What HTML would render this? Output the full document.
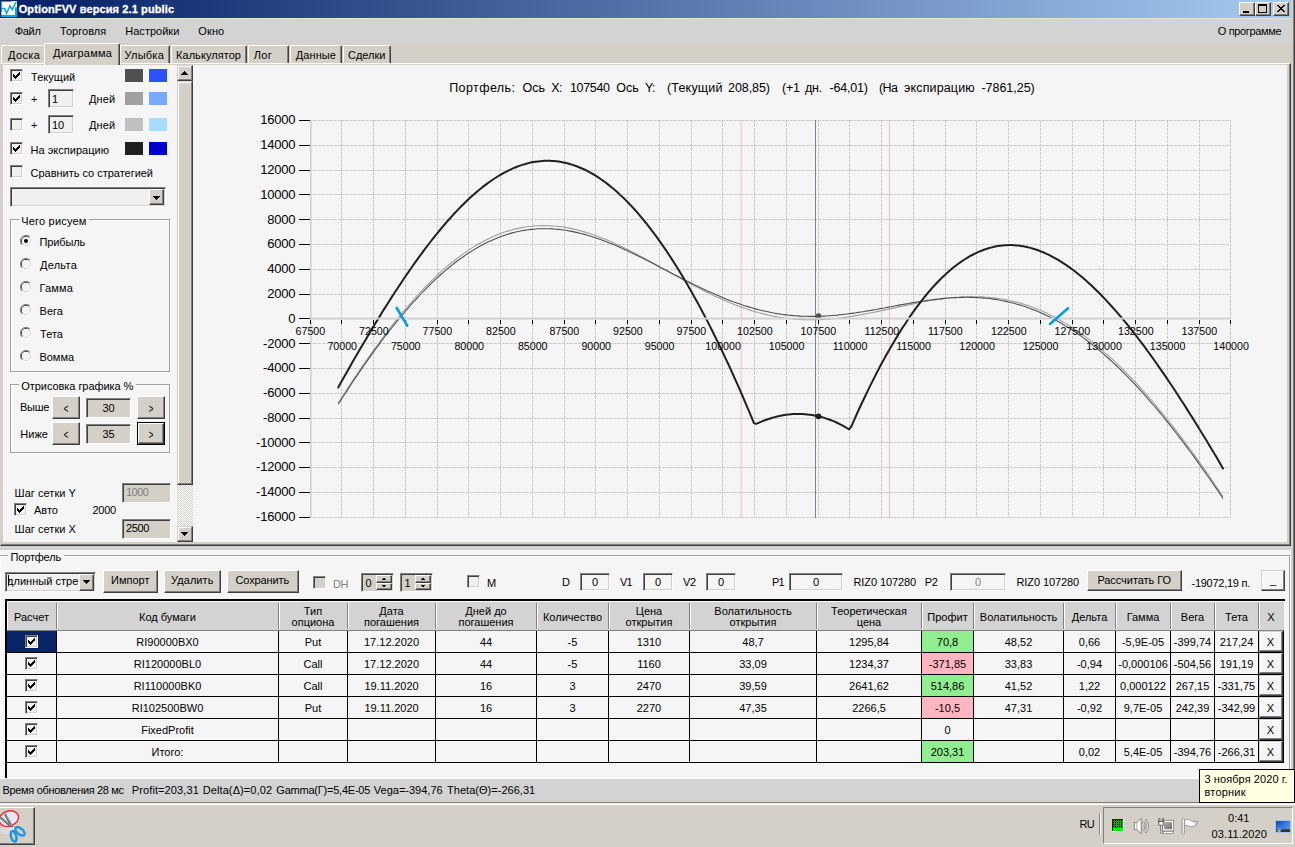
<!DOCTYPE html><html lang="ru"><head><meta charset="utf-8"><title>OptionFVV</title><style>html,body{margin:0;padding:0}
body{width:1295px;height:847px;overflow:hidden;background:#d4d0c8;position:relative;font-family:"Liberation Sans",sans-serif;font-size:11px;color:#000}
.a{position:absolute;box-sizing:border-box}
.t{white-space:pre}
.gl{transform:scale(0.72,1.22);transform-origin:50% 60%}
.dis{text-shadow:1px 1px 0 #fff}
.tt{-webkit-text-stroke:0.3px #fff}
.r{border:1px solid;border-color:#fff #404040 #404040 #fff;box-shadow:inset -1px -1px 0 #808080;background:#d4d0c8}
.r2{border:1px solid;border-color:#d4d0c8 #404040 #404040 #d4d0c8;box-shadow:inset -1px -1px 0 #808080,inset 1px 1px 0 #fff;background:#d4d0c8}
.s{border:1px solid;border-color:#808080 #fff #fff #808080;box-shadow:inset 1px 1px 0 #404040,inset -1px -1px 0 #d4d0c8}
</style></head><body>
<div class="a " style="left:0px;top:0px;width:1291px;height:18px;background:linear-gradient(90deg,#0a246a 0%,#0a246a 4%,#a6caf0 100%);"></div>
<svg class="a" style="left:1px;top:1px" width="16" height="16" viewBox="0 0 16 16"><rect width="16" height="16" fill="#fff"/><path d="M0 0H10.5V1H1V11.5H0ZM0 13H1V14H14V6.2H16V16H0Z" fill="#00a8f4"/><path d="M1 7.5H3.6L5.6 12.3L9 4.9L11.2 8.6L15.4 0.6" fill="none" stroke="#0ea2ee" stroke-width="1.5" stroke-linejoin="miter"/></svg>
<span class="a t tt" style="top:2.19px;font-size:11px;line-height:14px;color:#fff;font-weight:bold;letter-spacing:0.113px;left:18.7px;">OptionFVV версия 2.1 public</span>
<div class="a r" style="left:1239px;top:2px;width:16px;height:14px;"></div>
<div class="a r" style="left:1255px;top:2px;width:16px;height:14px;"></div>
<div class="a r" style="left:1273px;top:2px;width:16px;height:14px;"></div>
<div class="a " style="left:1243px;top:11px;width:6px;height:2px;background:#000;"></div>
<div class="a " style="left:1258px;top:4px;width:9px;height:9px;border:1px solid #000;border-top-width:2px;"></div>
<svg class="a" style="left:1277px;top:5px" width="9" height="8" viewBox="0 0 9 8" shape-rendering="crispEdges"><path d="M0 0h2v1h-2zM1 1h2v1h-2zM2 2h2v1h-2zM3 3h2v1h-2zM2 4h2v1h-2zM1 5h2v1h-2zM0 6h2v1h-2zM6 0h2v1h-2zM5 1h2v1h-2zM4 2h2v1h-2zM4 4h2v1h-2zM5 5h2v1h-2zM6 6h2v1h-2z" fill="#000"/></svg>
<div class="a " style="left:1293px;top:0px;width:1px;height:803px;background:#808080;"></div>
<div class="a " style="left:1294px;top:0px;width:1px;height:803px;background:#404040;"></div>
<div class="a " style="left:0px;top:18px;width:1291px;height:25px;background:#d3d3d3;border-top:1px solid #e6e2da;"></div>
<span class="a t " style="top:24.19px;font-size:11px;line-height:14px;letter-spacing:-0.312px;left:14.7px;">Файл</span>
<span class="a t " style="top:24.19px;font-size:11px;line-height:14px;letter-spacing:0.031px;left:60px;">Торговля</span>
<span class="a t " style="top:24.19px;font-size:11px;line-height:14px;letter-spacing:0.007px;left:125.3px;">Настройки</span>
<span class="a t " style="top:24.19px;font-size:11px;line-height:14px;letter-spacing:0.109px;left:198.3px;">Окно</span>
<span class="a t " style="top:24.19px;font-size:11px;line-height:14px;letter-spacing:-0.354px;left:1217.8px;">О программе</span>
<div class="a " style="left:1px;top:45px;width:45px;height:19px;border:1px solid;border-color:#fff #404040 transparent #fff;border-bottom:none;box-shadow:inset -1px 0 0 #808080;border-radius:2px 2px 0 0;"></div>
<span class="a t " style="top:48.19px;font-size:11px;line-height:14px;letter-spacing:0.365px;left:8px;">Доска</span>
<div class="a " style="left:120px;top:45px;width:50px;height:19px;border:1px solid;border-color:#fff #404040 transparent #fff;border-bottom:none;box-shadow:inset -1px 0 0 #808080;border-radius:2px 2px 0 0;"></div>
<span class="a t " style="top:48.19px;font-size:11px;line-height:14px;letter-spacing:0.240px;left:124.5px;">Улыбка</span>
<div class="a " style="left:171px;top:45px;width:76px;height:19px;border:1px solid;border-color:#fff #404040 transparent #fff;border-bottom:none;box-shadow:inset -1px 0 0 #808080;border-radius:2px 2px 0 0;"></div>
<span class="a t " style="top:48.19px;font-size:11px;line-height:14px;letter-spacing:0.054px;left:176px;">Калькулятор</span>
<div class="a " style="left:248px;top:45px;width:41px;height:19px;border:1px solid;border-color:#fff #404040 transparent #fff;border-bottom:none;box-shadow:inset -1px 0 0 #808080;border-radius:2px 2px 0 0;"></div>
<span class="a t " style="top:48.19px;font-size:11px;line-height:14px;letter-spacing:0.314px;left:253.7px;">Лог</span>
<div class="a " style="left:290px;top:45px;width:52px;height:19px;border:1px solid;border-color:#fff #404040 transparent #fff;border-bottom:none;box-shadow:inset -1px 0 0 #808080;border-radius:2px 2px 0 0;"></div>
<span class="a t " style="top:48.19px;font-size:11px;line-height:14px;letter-spacing:0.075px;left:295.8px;">Данные</span>
<div class="a " style="left:343px;top:45px;width:48px;height:19px;border:1px solid;border-color:#fff #404040 transparent #fff;border-bottom:none;box-shadow:inset -1px 0 0 #808080;border-radius:2px 2px 0 0;"></div>
<span class="a t " style="top:48.19px;font-size:11px;line-height:14px;letter-spacing:-0.033px;left:348px;">Сделки</span>
<div class="a " style="left:0px;top:63px;width:1291px;height:483px;border:1px solid;border-color:#fff #404040 #404040 #d4d0c8;box-shadow:inset -1px -1px 0 #808080;background:#d4d0c8;"></div>
<div class="a " style="left:44px;top:43px;width:76px;height:22px;border:1px solid;border-color:#fff #404040 transparent #fff;border-bottom:none;box-shadow:inset -1px 0 0 #808080;border-radius:2px 2px 0 0;background:#d4d0c8;"></div>
<span class="a t " style="top:46.19px;font-size:11px;line-height:14px;letter-spacing:0.200px;left:53px;">Диаграмма</span>
<div class="a " style="left:3px;top:65px;width:1284px;height:477px;background:#f5f5f5;"></div>
<div class="a s" style="left:10px;top:69px;width:13px;height:13px;background:#f0f0f0;"><svg class="a" style="left:2px;top:2px" width="7" height="7" viewBox="0 0 7 7" shape-rendering="crispEdges"><path d="M0 2h1v3h-1zM1 3h1v3h-1zM2 4h1v3h-1zM3 3h1v3h-1zM4 2h1v3h-1zM5 1h1v3h-1zM6 0h1v3h-1z" fill="#000"/></svg></div>
<span class="a t " style="top:70.19px;font-size:11px;line-height:14px;letter-spacing:0.043px;left:31px;">Текущий</span>
<div class="a " style="left:125px;top:69px;width:18px;height:13px;background:#505050;"></div>
<div class="a " style="left:149px;top:69px;width:18px;height:13px;background:#3050ff;"></div>
<div class="a s" style="left:10px;top:92px;width:13px;height:13px;background:#f0f0f0;"><svg class="a" style="left:2px;top:2px" width="7" height="7" viewBox="0 0 7 7" shape-rendering="crispEdges"><path d="M0 2h1v3h-1zM1 3h1v3h-1zM2 4h1v3h-1zM3 3h1v3h-1zM4 2h1v3h-1zM5 1h1v3h-1zM6 0h1v3h-1z" fill="#000"/></svg></div>
<span class="a t " style="top:92.19px;font-size:11px;line-height:14px;left:31px;">+</span>
<div class="a s" style="left:48px;top:89px;width:26px;height:19px;background:#f0f0f0;"></div>
<span class="a t " style="top:92.19px;font-size:11px;line-height:14px;left:52px;">1</span>
<span class="a t " style="top:92.19px;font-size:11px;line-height:14px;letter-spacing:0.126px;left:89px;">Дней</span>
<div class="a " style="left:125px;top:92px;width:18px;height:13px;background:#a0a0a0;"></div>
<div class="a " style="left:149px;top:92px;width:18px;height:13px;background:#78a8ff;"></div>
<div class="a s" style="left:10px;top:118px;width:13px;height:13px;background:#f0f0f0;"></div>
<span class="a t " style="top:118.19px;font-size:11px;line-height:14px;left:31px;">+</span>
<div class="a s" style="left:48px;top:115px;width:26px;height:19px;background:#f0f0f0;"></div>
<span class="a t " style="top:118.19px;font-size:11px;line-height:14px;left:52px;">10</span>
<span class="a t " style="top:118.19px;font-size:11px;line-height:14px;letter-spacing:0.126px;left:89px;">Дней</span>
<div class="a " style="left:125px;top:118px;width:18px;height:13px;background:#c0c0c0;"></div>
<div class="a " style="left:149px;top:118px;width:18px;height:13px;background:#a8dcff;"></div>
<div class="a s" style="left:10px;top:142px;width:13px;height:13px;background:#f0f0f0;"><svg class="a" style="left:2px;top:2px" width="7" height="7" viewBox="0 0 7 7" shape-rendering="crispEdges"><path d="M0 2h1v3h-1zM1 3h1v3h-1zM2 4h1v3h-1zM3 3h1v3h-1zM4 2h1v3h-1zM5 1h1v3h-1zM6 0h1v3h-1z" fill="#000"/></svg></div>
<span class="a t " style="top:143.19px;font-size:11px;line-height:14px;letter-spacing:0.023px;left:30.5px;">На экспирацию</span>
<div class="a " style="left:125px;top:142px;width:18px;height:13px;background:#202020;"></div>
<div class="a " style="left:149px;top:142px;width:18px;height:13px;background:#0000c8;"></div>
<div class="a s" style="left:10px;top:165px;width:13px;height:13px;background:#f0f0f0;"></div>
<span class="a t " style="top:165.69px;font-size:11px;line-height:14px;letter-spacing:-0.016px;left:30.5px;">Сравнить со стратегией</span>
<div class="a s" style="left:10px;top:187px;width:156px;height:20px;background:#f0f0f0;"></div>
<div class="a r" style="left:149px;top:189px;width:15px;height:16px;"></div>
<svg class="a" style="left:153px;top:196px" width="7" height="4" viewBox="0 0 7 4" shape-rendering="crispEdges"><path d="M0 0h7v1h-7zM1 1h5v1h-5zM2 2h3v1h-3zM3 3h1v1h-1z" fill="#000"/></svg>
<div class="a " style="left:10px;top:219px;width:160px;height:153px;border:1px solid #a0a0a0;box-shadow:inset 1px 1px 0 #fff, 1px 1px 0 #fff;"></div>
<div class="a " style="left:19.3px;top:213px;width:70.2px;height:13px;background:#f5f5f5;"></div>
<span class="a t " style="top:214.19px;font-size:11px;line-height:14px;letter-spacing:0.180px;left:21.3px;">Чего рисуем</span>
<svg class="a" style="left:20px;top:235px" width="12" height="12" viewBox="0 0 12 12"><circle cx="6" cy="6" r="5.5" fill="#fff"/><path d="M10 2A5.5 5.5 0 0 0 2 10" fill="none" stroke="#808080" stroke-width="1"/><path d="M9.3 2.7A4.6 4.6 0 0 0 2.7 9.3" fill="none" stroke="#404040" stroke-width="1"/><path d="M10 2A5.5 5.5 0 0 1 2 10" fill="none" stroke="#fff" stroke-width="1"/><path d="M9.3 2.7A4.6 4.6 0 0 1 2.7 9.3" fill="none" stroke="#d4d0c8" stroke-width="1"/><circle cx="6" cy="6" r="3.9" fill="#f5f5f5"/><circle cx="6" cy="6" r="2" fill="#000"/></svg>
<span class="a t " style="top:234.89px;font-size:11px;line-height:14px;letter-spacing:-0.147px;left:39.5px;">Прибыль</span>
<svg class="a" style="left:20px;top:258px" width="12" height="12" viewBox="0 0 12 12"><circle cx="6" cy="6" r="5.5" fill="#fff"/><path d="M10 2A5.5 5.5 0 0 0 2 10" fill="none" stroke="#808080" stroke-width="1"/><path d="M9.3 2.7A4.6 4.6 0 0 0 2.7 9.3" fill="none" stroke="#404040" stroke-width="1"/><path d="M10 2A5.5 5.5 0 0 1 2 10" fill="none" stroke="#fff" stroke-width="1"/><path d="M9.3 2.7A4.6 4.6 0 0 1 2.7 9.3" fill="none" stroke="#d4d0c8" stroke-width="1"/><circle cx="6" cy="6" r="3.9" fill="#f5f5f5"/></svg>
<span class="a t " style="top:257.89px;font-size:11px;line-height:14px;letter-spacing:0.245px;left:40px;">Дельта</span>
<svg class="a" style="left:20px;top:281px" width="12" height="12" viewBox="0 0 12 12"><circle cx="6" cy="6" r="5.5" fill="#fff"/><path d="M10 2A5.5 5.5 0 0 0 2 10" fill="none" stroke="#808080" stroke-width="1"/><path d="M9.3 2.7A4.6 4.6 0 0 0 2.7 9.3" fill="none" stroke="#404040" stroke-width="1"/><path d="M10 2A5.5 5.5 0 0 1 2 10" fill="none" stroke="#fff" stroke-width="1"/><path d="M9.3 2.7A4.6 4.6 0 0 1 2.7 9.3" fill="none" stroke="#d4d0c8" stroke-width="1"/><circle cx="6" cy="6" r="3.9" fill="#f5f5f5"/></svg>
<span class="a t " style="top:280.89px;font-size:11px;line-height:14px;letter-spacing:0.159px;left:39.5px;">Гамма</span>
<svg class="a" style="left:20px;top:304px" width="12" height="12" viewBox="0 0 12 12"><circle cx="6" cy="6" r="5.5" fill="#fff"/><path d="M10 2A5.5 5.5 0 0 0 2 10" fill="none" stroke="#808080" stroke-width="1"/><path d="M9.3 2.7A4.6 4.6 0 0 0 2.7 9.3" fill="none" stroke="#404040" stroke-width="1"/><path d="M10 2A5.5 5.5 0 0 1 2 10" fill="none" stroke="#fff" stroke-width="1"/><path d="M9.3 2.7A4.6 4.6 0 0 1 2.7 9.3" fill="none" stroke="#d4d0c8" stroke-width="1"/><circle cx="6" cy="6" r="3.9" fill="#f5f5f5"/></svg>
<span class="a t " style="top:303.89px;font-size:11px;line-height:14px;letter-spacing:0.039px;left:39.5px;">Вега</span>
<svg class="a" style="left:20px;top:327px" width="12" height="12" viewBox="0 0 12 12"><circle cx="6" cy="6" r="5.5" fill="#fff"/><path d="M10 2A5.5 5.5 0 0 0 2 10" fill="none" stroke="#808080" stroke-width="1"/><path d="M9.3 2.7A4.6 4.6 0 0 0 2.7 9.3" fill="none" stroke="#404040" stroke-width="1"/><path d="M10 2A5.5 5.5 0 0 1 2 10" fill="none" stroke="#fff" stroke-width="1"/><path d="M9.3 2.7A4.6 4.6 0 0 1 2.7 9.3" fill="none" stroke="#d4d0c8" stroke-width="1"/><circle cx="6" cy="6" r="3.9" fill="#f5f5f5"/></svg>
<span class="a t " style="top:326.89px;font-size:11px;line-height:14px;letter-spacing:0.027px;left:40px;">Тета</span>
<svg class="a" style="left:20px;top:350px" width="12" height="12" viewBox="0 0 12 12"><circle cx="6" cy="6" r="5.5" fill="#fff"/><path d="M10 2A5.5 5.5 0 0 0 2 10" fill="none" stroke="#808080" stroke-width="1"/><path d="M9.3 2.7A4.6 4.6 0 0 0 2.7 9.3" fill="none" stroke="#404040" stroke-width="1"/><path d="M10 2A5.5 5.5 0 0 1 2 10" fill="none" stroke="#fff" stroke-width="1"/><path d="M9.3 2.7A4.6 4.6 0 0 1 2.7 9.3" fill="none" stroke="#d4d0c8" stroke-width="1"/><circle cx="6" cy="6" r="3.9" fill="#f5f5f5"/></svg>
<span class="a t " style="top:349.89px;font-size:11px;line-height:14px;letter-spacing:-0.041px;left:39.5px;">Вомма</span>
<div class="a " style="left:10px;top:384px;width:160px;height:69px;border:1px solid #a0a0a0;box-shadow:inset 1px 1px 0 #fff, 1px 1px 0 #fff;"></div>
<div class="a " style="left:19.3px;top:378px;width:117.00000000000001px;height:13px;background:#f5f5f5;"></div>
<span class="a t " style="top:379.19px;font-size:11px;line-height:14px;letter-spacing:-0.059px;left:21.3px;">Отрисовка графика %</span>
<span class="a t " style="top:400.49px;font-size:11px;line-height:14px;letter-spacing:-0.297px;left:20px;">Выше</span>
<div class="a r" style="left:52px;top:396px;width:28px;height:23px;background:#d4d0c8;"></div>
<span class="a t gl" style="top:400.69px;font-size:11px;line-height:14px;left:52px;width:28px;text-align:center;">&lt;</span>
<div class="a s" style="left:86px;top:398px;width:45px;height:20px;background:#d4d0c8;"></div>
<span class="a t " style="top:400.99px;font-size:11px;line-height:14px;left:86px;width:45px;text-align:center;">30</span>
<div class="a r" style="left:137px;top:396px;width:28px;height:23px;background:#d4d0c8;"></div>
<span class="a t gl" style="top:400.69px;font-size:11px;line-height:14px;left:137px;width:28px;text-align:center;">&gt;</span>
<span class="a t " style="top:426.69px;font-size:11px;line-height:14px;letter-spacing:0.030px;left:20.3px;">Ниже</span>
<div class="a r" style="left:52px;top:422px;width:28px;height:23px;background:#d4d0c8;"></div>
<span class="a t gl" style="top:426.69px;font-size:11px;line-height:14px;left:52px;width:28px;text-align:center;">&lt;</span>
<div class="a s" style="left:86px;top:424px;width:45px;height:20px;background:#d4d0c8;"></div>
<span class="a t " style="top:426.99px;font-size:11px;line-height:14px;left:86px;width:45px;text-align:center;">35</span>
<div class="a " style="left:137px;top:422px;width:28px;height:23px;border:1px solid #000;background:#d4d0c8;"></div>
<div class="a r" style="left:138px;top:423px;width:26px;height:21px;background:#d4d0c8;"></div>
<span class="a t gl" style="top:426.69px;font-size:11px;line-height:14px;left:137px;width:28px;text-align:center;">&gt;</span>
<span class="a t " style="top:485.89px;font-size:11px;line-height:14px;letter-spacing:0.053px;left:14.5px;">Шаг сетки Y</span>
<div class="a s" style="left:122px;top:483px;width:49px;height:20px;background:#d4d0c8;"></div>
<span class="a t " style="top:485.49px;font-size:11px;line-height:14px;color:#808080;letter-spacing:-0.496px;left:126px;">1000</span>
<div class="a s" style="left:14px;top:503px;width:13px;height:13px;background:#f0f0f0;"><svg class="a" style="left:2px;top:2px" width="7" height="7" viewBox="0 0 7 7" shape-rendering="crispEdges"><path d="M0 2h1v3h-1zM1 3h1v3h-1zM2 4h1v3h-1zM3 3h1v3h-1zM4 2h1v3h-1zM5 1h1v3h-1zM6 0h1v3h-1z" fill="#000"/></svg></div>
<span class="a t " style="top:503.19px;font-size:11px;line-height:14px;left:34px;">Авто</span>
<span class="a t " style="top:502.89px;font-size:11px;line-height:14px;letter-spacing:-0.246px;left:92.5px;">2000</span>
<span class="a t " style="top:521.69px;font-size:11px;line-height:14px;letter-spacing:0.053px;left:14.5px;">Шаг сетки X</span>
<div class="a s" style="left:122px;top:519px;width:49px;height:20px;background:#d4d0c8;"></div>
<span class="a t " style="top:521.19px;font-size:11px;line-height:14px;letter-spacing:-0.371px;left:126px;">2500</span>
<div class="a " style="left:177px;top:65px;width:16px;height:477px;background:repeating-conic-gradient(#fff 0% 25%,#d4d0c8 0% 50%) 0 0/2px 2px;"></div>
<div class="a r2" style="left:177px;top:65px;width:16px;height:16px;"></div>
<svg class="a" style="left:181px;top:71px" width="7" height="4" viewBox="0 0 7 4" shape-rendering="crispEdges"><path d="M3 0h1v1h-1zM2 1h3v1h-3zM1 2h5v1h-5zM0 3h7v1h-7z" fill="#000"/></svg>
<div class="a r2" style="left:177px;top:81px;width:16px;height:404px;"></div>
<div class="a r2" style="left:177px;top:526px;width:16px;height:16px;"></div>
<svg class="a" style="left:181px;top:532px" width="7" height="4" viewBox="0 0 7 4" shape-rendering="crispEdges"><path d="M0 0h7v1h-7zM1 1h5v1h-5zM2 2h3v1h-3zM3 3h1v1h-1z" fill="#000"/></svg>
<svg class="a" style="left:0;top:0" width="1295" height="847" viewBox="0 0 1295 847"><path d="M341.5 120V518M373.5 120V518M405.5 120V518M437.5 120V518M468.5 120V518M500.5 120V518M532.5 120V518M564.5 120V518M595.5 120V518M627.5 120V518M659.5 120V518M691.5 120V518M722.5 120V518M754.5 120V518M786.5 120V518M818.5 120V518M849.5 120V518M881.5 120V518M913.5 120V518M945.5 120V518M976.5 120V518M1008.5 120V518M1040.5 120V518M1072.5 120V518M1103.5 120V518M1135.5 120V518M1167.5 120V518M1199.5 120V518M1230.5 120V518M310 120.5H1231M310 145.5H1231M310 170.5H1231M310 194.5H1231M310 219.5H1231M310 244.5H1231M310 269.5H1231M310 294.5H1231M310 343.5H1231M310 368.5H1231M310 393.5H1231M310 418.5H1231M310 442.5H1231M310 467.5H1231M310 492.5H1231M310 517.5H1231" stroke="#c9c9c9" stroke-width="1" stroke-dasharray="3 1" fill="none" shape-rendering="crispEdges"/><path d="M741.2 120V518M889.45 120V518" stroke="#ffb6c1" stroke-width="1"/><path d="M815.5 120V518" stroke="#6a85a8" stroke-width="1" shape-rendering="crispEdges"/><path d="M338.2 403.1 L340.5 399.4 L342.8 395.8 L345.2 392.2 L347.5 388.6 L349.8 385.0 L352.1 381.5 L354.4 378.0 L356.8 374.5 L359.1 371.0 L361.4 367.6 L363.7 364.2 L366.1 360.9 L368.4 357.5 L370.7 354.2 L373.0 351.0 L375.3 347.7 L377.7 344.5 L380.0 341.4 L382.3 338.2 L384.6 335.1 L387.0 332.1 L389.3 329.1 L391.6 326.1 L393.9 323.1 L396.2 320.2 L398.6 317.3 L400.9 314.5 L403.2 311.7 L405.5 308.9 L407.9 306.2 L410.2 303.5 L412.5 300.8 L414.8 298.2 L417.2 295.7 L419.5 293.1 L421.8 290.7 L424.1 288.2 L426.4 285.8 L428.8 283.5 L431.1 281.2 L433.4 278.9 L435.7 276.7 L438.1 274.5 L440.4 272.4 L442.7 270.3 L445.0 268.2 L447.3 266.2 L449.7 264.3 L452.0 262.4 L454.3 260.5 L456.6 258.7 L459.0 257.0 L461.3 255.2 L463.6 253.6 L465.9 252.0 L468.2 250.4 L470.6 248.9 L472.9 247.4 L475.2 245.9 L477.5 244.6 L479.9 243.2 L482.2 242.0 L484.5 240.7 L486.8 239.5 L489.1 238.4 L491.5 237.3 L493.8 236.3 L496.1 235.3 L498.4 234.3 L500.8 233.5 L503.1 232.6 L505.4 231.8 L507.7 231.1 L510.0 230.4 L512.4 229.7 L514.7 229.1 L517.0 228.6 L519.3 228.1 L521.7 227.6 L524.0 227.2 L526.3 226.8 L528.6 226.5 L531.0 226.3 L533.3 226.0 L535.6 225.8 L537.9 225.7 L540.2 225.6 L542.6 225.6 L544.9 225.6 L547.2 225.6 L549.5 225.7 L551.9 225.9 L554.2 226.0 L556.5 226.2 L558.8 226.5 L561.1 226.8 L563.5 227.1 L565.8 227.5 L568.1 227.9 L570.4 228.4 L572.8 228.9 L575.1 229.4 L577.4 230.0 L579.7 230.6 L582.0 231.2 L584.4 231.9 L586.7 232.6 L589.0 233.3 L591.3 234.1 L593.7 234.9 L596.0 235.7 L598.3 236.6 L600.6 237.5 L602.9 238.4 L605.3 239.3 L607.6 240.3 L609.9 241.3 L612.2 242.3 L614.6 243.3 L616.9 244.4 L619.2 245.5 L621.5 246.6 L623.9 247.7 L626.2 248.8 L628.5 250.0 L630.8 251.2 L633.1 252.4 L635.5 253.6 L637.8 254.8 L640.1 256.0 L642.4 257.2 L644.8 258.5 L647.1 259.8 L649.4 261.0 L651.7 262.3 L654.0 263.6 L656.4 264.9 L658.7 266.2 L661.0 267.5 L663.3 268.8 L665.7 270.1 L668.0 271.4 L670.3 272.7 L672.6 273.9 L674.9 275.2 L677.3 276.5 L679.6 277.8 L681.9 279.1 L684.2 280.4 L686.6 281.6 L688.9 282.9 L691.2 284.1 L693.5 285.4 L695.8 286.6 L698.2 287.8 L700.5 289.0 L702.8 290.2 L705.1 291.4 L707.5 292.5 L709.8 293.7 L712.1 294.8 L714.4 295.9 L716.7 297.0 L719.1 298.0 L721.4 299.1 L723.7 300.1 L726.0 301.1 L728.4 302.1 L730.7 303.1 L733.0 304.0 L735.3 304.9 L737.7 305.8 L740.0 306.7 L742.3 307.5 L744.6 308.3 L746.9 309.1 L749.3 309.9 L751.6 310.6 L753.9 311.3 L756.2 312.0 L758.6 312.7 L760.9 313.3 L763.2 313.9 L765.5 314.4 L767.8 315.0 L770.2 315.5 L772.5 316.0 L774.8 316.4 L777.1 316.9 L779.5 317.2 L781.8 317.6 L784.1 318.0 L786.4 318.3 L788.7 318.5 L791.1 318.8 L793.4 319.0 L795.7 319.2 L798.0 319.4 L800.4 319.5 L802.7 319.6 L805.0 319.7 L807.3 319.8 L809.6 319.8 L812.0 319.8 L814.3 319.8 L816.6 319.7 L818.9 319.7 L821.3 319.6 L823.6 319.5 L825.9 319.3 L828.2 319.1 L830.5 319.0 L832.9 318.8 L835.2 318.5 L837.5 318.3 L839.8 318.0 L842.2 317.7 L844.5 317.4 L846.8 317.1 L849.1 316.7 L851.5 316.4 L853.8 316.0 L856.1 315.6 L858.4 315.2 L860.7 314.8 L863.1 314.4 L865.4 313.9 L867.7 313.5 L870.0 313.0 L872.4 312.6 L874.7 312.1 L877.0 311.6 L879.3 311.1 L881.6 310.6 L884.0 310.1 L886.3 309.6 L888.6 309.1 L890.9 308.6 L893.3 308.1 L895.6 307.6 L897.9 307.1 L900.2 306.6 L902.5 306.1 L904.9 305.6 L907.2 305.1 L909.5 304.6 L911.8 304.1 L914.2 303.6 L916.5 303.2 L918.8 302.7 L921.1 302.3 L923.4 301.8 L925.8 301.4 L928.1 301.0 L930.4 300.6 L932.7 300.2 L935.1 299.9 L937.4 299.5 L939.7 299.2 L942.0 298.9 L944.4 298.6 L946.7 298.3 L949.0 298.0 L951.3 297.8 L953.6 297.6 L956.0 297.4 L958.3 297.2 L960.6 297.1 L962.9 296.9 L965.3 296.8 L967.6 296.8 L969.9 296.7 L972.2 296.7 L974.5 296.7 L976.9 296.7 L979.2 296.8 L981.5 296.9 L983.8 297.0 L986.2 297.2 L988.5 297.4 L990.8 297.6 L993.1 297.8 L995.4 298.1 L997.8 298.4 L1000.1 298.8 L1002.4 299.1 L1004.7 299.6 L1007.1 300.0 L1009.4 300.5 L1011.7 301.0 L1014.0 301.6 L1016.3 302.1 L1018.7 302.8 L1021.0 303.4 L1023.3 304.1 L1025.6 304.9 L1028.0 305.6 L1030.3 306.4 L1032.6 307.3 L1034.9 308.2 L1037.2 309.1 L1039.6 310.0 L1041.9 311.0 L1044.2 312.1 L1046.5 313.1 L1048.9 314.3 L1051.2 315.4 L1053.5 316.6 L1055.8 317.8 L1058.2 319.1 L1060.5 320.4 L1062.8 321.7 L1065.1 323.1 L1067.4 324.5 L1069.8 326.0 L1072.1 327.4 L1074.4 329.0 L1076.7 330.5 L1079.1 332.1 L1081.4 333.8 L1083.7 335.5 L1086.0 337.2 L1088.3 338.9 L1090.7 340.7 L1093.0 342.6 L1095.3 344.4 L1097.6 346.3 L1100.0 348.3 L1102.3 350.3 L1104.6 352.3 L1106.9 354.3 L1109.2 356.4 L1111.6 358.5 L1113.9 360.7 L1116.2 362.9 L1118.5 365.1 L1120.9 367.3 L1123.2 369.6 L1125.5 372.0 L1127.8 374.3 L1130.1 376.7 L1132.5 379.2 L1134.8 381.6 L1137.1 384.1 L1139.4 386.6 L1141.8 389.2 L1144.1 391.8 L1146.4 394.4 L1148.7 397.1 L1151.0 399.7 L1153.4 402.5 L1155.7 405.2 L1158.0 408.0 L1160.3 410.8 L1162.7 413.6 L1165.0 416.5 L1167.3 419.4 L1169.6 422.3 L1172.0 425.2 L1174.3 428.2 L1176.6 431.2 L1178.9 434.3 L1181.2 437.3 L1183.6 440.4 L1185.9 443.5 L1188.2 446.6 L1190.5 449.8 L1192.9 453.0 L1195.2 456.2 L1197.5 459.4 L1199.8 462.7 L1202.1 466.0 L1204.5 469.3 L1206.8 472.6 L1209.1 476.0 L1211.4 479.3 L1213.8 482.7 L1216.1 486.2 L1218.4 489.6 L1220.7 493.1 L1223.0 496.5" stroke="#a0a0a0" stroke-width="1.1" fill="none"/><path d="M338.2 404.3 L340.5 400.7 L342.8 397.0 L345.2 393.5 L347.5 389.9 L349.8 386.4 L352.1 382.8 L354.4 379.4 L356.8 375.9 L359.1 372.5 L361.4 369.1 L363.7 365.8 L366.1 362.4 L368.4 359.1 L370.7 355.9 L373.0 352.6 L375.3 349.4 L377.7 346.3 L380.0 343.1 L382.3 340.0 L384.6 337.0 L387.0 333.9 L389.3 330.9 L391.6 328.0 L393.9 325.1 L396.2 322.2 L398.6 319.3 L400.9 316.5 L403.2 313.8 L405.5 311.0 L407.9 308.3 L410.2 305.7 L412.5 303.1 L414.8 300.5 L417.2 298.0 L419.5 295.5 L421.8 293.0 L424.1 290.6 L426.4 288.3 L428.8 285.9 L431.1 283.7 L433.4 281.4 L435.7 279.2 L438.1 277.1 L440.4 275.0 L442.7 272.9 L445.0 270.9 L447.3 268.9 L449.7 267.0 L452.0 265.1 L454.3 263.3 L456.6 261.5 L459.0 259.8 L461.3 258.1 L463.6 256.5 L465.9 254.9 L468.2 253.3 L470.6 251.8 L472.9 250.4 L475.2 249.0 L477.5 247.6 L479.9 246.3 L482.2 245.0 L484.5 243.8 L486.8 242.6 L489.1 241.5 L491.5 240.4 L493.8 239.4 L496.1 238.4 L498.4 237.5 L500.8 236.6 L503.1 235.8 L505.4 235.0 L507.7 234.3 L510.0 233.6 L512.4 232.9 L514.7 232.3 L517.0 231.8 L519.3 231.3 L521.7 230.8 L524.0 230.4 L526.3 230.0 L528.6 229.7 L531.0 229.4 L533.3 229.2 L535.6 229.0 L537.9 228.8 L540.2 228.7 L542.6 228.7 L544.9 228.7 L547.2 228.7 L549.5 228.8 L551.9 228.9 L554.2 229.0 L556.5 229.2 L558.8 229.4 L561.1 229.7 L563.5 230.0 L565.8 230.3 L568.1 230.7 L570.4 231.1 L572.8 231.6 L575.1 232.1 L577.4 232.6 L579.7 233.2 L582.0 233.8 L584.4 234.4 L586.7 235.0 L589.0 235.7 L591.3 236.4 L593.7 237.2 L596.0 238.0 L598.3 238.8 L600.6 239.6 L602.9 240.4 L605.3 241.3 L607.6 242.2 L609.9 243.2 L612.2 244.1 L614.6 245.1 L616.9 246.1 L619.2 247.1 L621.5 248.1 L623.9 249.2 L626.2 250.2 L628.5 251.3 L630.8 252.4 L633.1 253.5 L635.5 254.7 L637.8 255.8 L640.1 256.9 L642.4 258.1 L644.8 259.3 L647.1 260.5 L649.4 261.6 L651.7 262.8 L654.0 264.0 L656.4 265.2 L658.7 266.4 L661.0 267.7 L663.3 268.9 L665.7 270.1 L668.0 271.3 L670.3 272.5 L672.6 273.7 L674.9 274.9 L677.3 276.1 L679.6 277.3 L681.9 278.5 L684.2 279.7 L686.6 280.9 L688.9 282.0 L691.2 283.2 L693.5 284.4 L695.8 285.5 L698.2 286.6 L700.5 287.7 L702.8 288.8 L705.1 289.9 L707.5 291.0 L709.8 292.1 L712.1 293.1 L714.4 294.1 L716.7 295.1 L719.1 296.1 L721.4 297.1 L723.7 298.1 L726.0 299.0 L728.4 299.9 L730.7 300.8 L733.0 301.7 L735.3 302.5 L737.7 303.3 L740.0 304.1 L742.3 304.9 L744.6 305.7 L746.9 306.4 L749.3 307.1 L751.6 307.8 L753.9 308.4 L756.2 309.1 L758.6 309.7 L760.9 310.3 L763.2 310.8 L765.5 311.3 L767.8 311.8 L770.2 312.3 L772.5 312.8 L774.8 313.2 L777.1 313.6 L779.5 313.9 L781.8 314.3 L784.1 314.6 L786.4 314.9 L788.7 315.2 L791.1 315.4 L793.4 315.6 L795.7 315.8 L798.0 315.9 L800.4 316.1 L802.7 316.2 L805.0 316.3 L807.3 316.3 L809.6 316.4 L812.0 316.4 L814.3 316.4 L816.6 316.3 L818.9 316.3 L821.3 316.2 L823.6 316.1 L825.9 316.0 L828.2 315.8 L830.5 315.7 L832.9 315.5 L835.2 315.3 L837.5 315.1 L839.8 314.8 L842.2 314.6 L844.5 314.3 L846.8 314.0 L849.1 313.7 L851.5 313.4 L853.8 313.1 L856.1 312.8 L858.4 312.4 L860.7 312.0 L863.1 311.7 L865.4 311.3 L867.7 310.9 L870.0 310.5 L872.4 310.1 L874.7 309.7 L877.0 309.3 L879.3 308.8 L881.6 308.4 L884.0 308.0 L886.3 307.5 L888.6 307.1 L890.9 306.7 L893.3 306.2 L895.6 305.8 L897.9 305.4 L900.2 304.9 L902.5 304.5 L904.9 304.1 L907.2 303.7 L909.5 303.3 L911.8 302.9 L914.2 302.5 L916.5 302.1 L918.8 301.7 L921.1 301.3 L923.4 301.0 L925.8 300.6 L928.1 300.3 L930.4 300.0 L932.7 299.7 L935.1 299.4 L937.4 299.1 L939.7 298.9 L942.0 298.6 L944.4 298.4 L946.7 298.2 L949.0 298.0 L951.3 297.8 L953.6 297.7 L956.0 297.6 L958.3 297.5 L960.6 297.4 L962.9 297.4 L965.3 297.3 L967.6 297.3 L969.9 297.4 L972.2 297.4 L974.5 297.5 L976.9 297.6 L979.2 297.7 L981.5 297.9 L983.8 298.1 L986.2 298.3 L988.5 298.5 L990.8 298.8 L993.1 299.1 L995.4 299.4 L997.8 299.8 L1000.1 300.2 L1002.4 300.7 L1004.7 301.1 L1007.1 301.6 L1009.4 302.2 L1011.7 302.7 L1014.0 303.3 L1016.3 304.0 L1018.7 304.6 L1021.0 305.3 L1023.3 306.1 L1025.6 306.8 L1028.0 307.7 L1030.3 308.5 L1032.6 309.4 L1034.9 310.3 L1037.2 311.3 L1039.6 312.3 L1041.9 313.3 L1044.2 314.3 L1046.5 315.4 L1048.9 316.6 L1051.2 317.8 L1053.5 319.0 L1055.8 320.2 L1058.2 321.5 L1060.5 322.8 L1062.8 324.2 L1065.1 325.6 L1067.4 327.0 L1069.8 328.5 L1072.1 330.0 L1074.4 331.5 L1076.7 333.1 L1079.1 334.7 L1081.4 336.4 L1083.7 338.1 L1086.0 339.8 L1088.3 341.6 L1090.7 343.4 L1093.0 345.2 L1095.3 347.1 L1097.6 349.0 L1100.0 350.9 L1102.3 352.9 L1104.6 354.9 L1106.9 357.0 L1109.2 359.0 L1111.6 361.2 L1113.9 363.3 L1116.2 365.5 L1118.5 367.7 L1120.9 370.0 L1123.2 372.3 L1125.5 374.6 L1127.8 376.9 L1130.1 379.3 L1132.5 381.8 L1134.8 384.2 L1137.1 386.7 L1139.4 389.2 L1141.8 391.8 L1144.1 394.3 L1146.4 396.9 L1148.7 399.6 L1151.0 402.3 L1153.4 405.0 L1155.7 407.7 L1158.0 410.4 L1160.3 413.2 L1162.7 416.0 L1165.0 418.9 L1167.3 421.8 L1169.6 424.7 L1172.0 427.6 L1174.3 430.6 L1176.6 433.5 L1178.9 436.6 L1181.2 439.6 L1183.6 442.7 L1185.9 445.8 L1188.2 448.9 L1190.5 452.0 L1192.9 455.2 L1195.2 458.4 L1197.5 461.6 L1199.8 464.8 L1202.1 468.1 L1204.5 471.4 L1206.8 474.7 L1209.1 478.0 L1211.4 481.4 L1213.8 484.7 L1216.1 488.1 L1218.4 491.5 L1220.7 495.0 L1223.0 498.4" stroke="#505050" stroke-width="1.1" fill="none"/><path d="M338.2 387.5 L340.5 383.3 L342.8 379.2 L345.2 375.1 L347.5 371.0 L349.8 366.9 L352.1 362.8 L354.4 358.8 L356.8 354.8 L359.1 350.8 L361.4 346.8 L363.7 342.9 L366.1 338.9 L368.4 335.0 L370.7 331.1 L373.0 327.3 L375.3 323.4 L377.7 319.6 L380.0 315.9 L382.3 312.1 L384.6 308.4 L387.0 304.7 L389.3 301.0 L391.6 297.4 L393.9 293.8 L396.2 290.2 L398.6 286.7 L400.9 283.2 L403.2 279.7 L405.5 276.3 L407.9 272.9 L410.2 269.5 L412.5 266.2 L414.8 262.9 L417.2 259.6 L419.5 256.4 L421.8 253.3 L424.1 250.1 L426.4 247.1 L428.8 244.0 L431.1 241.0 L433.4 238.1 L435.7 235.1 L438.1 232.3 L440.4 229.5 L442.7 226.7 L445.0 224.0 L447.3 221.3 L449.7 218.7 L452.0 216.1 L454.3 213.5 L456.6 211.1 L459.0 208.6 L461.3 206.3 L463.6 204.0 L465.9 201.7 L468.2 199.5 L470.6 197.3 L472.9 195.2 L475.2 193.2 L477.5 191.2 L479.9 189.3 L482.2 187.4 L484.5 185.6 L486.8 183.9 L489.1 182.2 L491.5 180.5 L493.8 179.0 L496.1 177.5 L498.4 176.0 L500.8 174.6 L503.1 173.3 L505.4 172.1 L507.7 170.9 L510.0 169.8 L512.4 168.7 L514.7 167.7 L517.0 166.8 L519.3 165.9 L521.7 165.1 L524.0 164.4 L526.3 163.7 L528.6 163.1 L531.0 162.6 L533.3 162.1 L535.6 161.7 L537.9 161.4 L540.2 161.2 L542.6 161.0 L544.9 160.8 L547.2 160.8 L549.5 160.8 L551.9 160.9 L554.2 161.1 L556.5 161.3 L558.8 161.6 L561.1 162.0 L563.5 162.4 L565.8 162.9 L568.1 163.5 L570.4 164.2 L572.8 164.9 L575.1 165.7 L577.4 166.5 L579.7 167.5 L582.0 168.5 L584.4 169.5 L586.7 170.7 L589.0 171.9 L591.3 173.2 L593.7 174.5 L596.0 175.9 L598.3 177.4 L600.6 179.0 L602.9 180.6 L605.3 182.3 L607.6 184.1 L609.9 185.9 L612.2 187.8 L614.6 189.8 L616.9 191.8 L619.2 193.9 L621.5 196.1 L623.9 198.3 L626.2 200.6 L628.5 203.0 L630.8 205.4 L633.1 207.9 L635.5 210.5 L637.8 213.2 L640.1 215.9 L642.4 218.6 L644.8 221.5 L647.1 224.3 L649.4 227.3 L651.7 230.3 L654.0 233.4 L656.4 236.6 L658.7 239.8 L661.0 243.1 L663.3 246.4 L665.7 249.8 L668.0 253.3 L670.3 256.8 L672.6 260.4 L674.9 264.0 L677.3 267.7 L679.6 271.5 L681.9 275.3 L684.2 279.2 L686.6 283.2 L688.9 287.2 L691.2 291.3 L693.5 295.4 L695.8 299.6 L698.2 303.8 L700.5 308.1 L702.8 312.5 L705.1 316.9 L707.5 321.4 L709.8 325.9 L712.1 330.5 L714.4 335.2 L716.7 339.9 L719.1 344.7 L721.4 349.5 L723.7 354.4 L726.0 359.3 L728.4 364.3 L730.7 369.4 L733.0 374.5 L735.3 379.6 L737.7 384.9 L740.0 390.2 L742.3 395.5 L744.6 400.9 L746.9 406.4 L749.3 411.9 L751.6 417.4 L753.9 423.1 L756.2 423.9 L758.6 422.9 L760.9 421.9 L763.2 420.9 L765.5 420.0 L767.8 419.2 L770.2 418.5 L772.5 417.8 L774.8 417.1 L777.1 416.5 L779.5 416.0 L781.8 415.5 L784.1 415.1 L786.4 414.8 L788.7 414.5 L791.1 414.2 L793.4 414.1 L795.7 414.0 L798.0 413.9 L800.4 414.0 L802.7 414.0 L805.0 414.2 L807.3 414.4 L809.6 414.7 L812.0 415.0 L814.3 415.4 L816.6 415.9 L818.9 416.4 L821.3 417.0 L823.6 417.6 L825.9 418.4 L828.2 419.2 L830.5 420.0 L832.9 420.9 L835.2 421.9 L837.5 423.0 L839.8 424.1 L842.2 425.3 L844.5 426.6 L846.8 428.0 L849.1 429.4 L851.5 426.1 L853.8 420.8 L856.1 415.6 L858.4 410.5 L860.7 405.5 L863.1 400.5 L865.4 395.7 L867.7 390.8 L870.0 386.1 L872.4 381.4 L874.7 376.9 L877.0 372.3 L879.3 367.9 L881.6 363.5 L884.0 359.3 L886.3 355.1 L888.6 350.9 L890.9 346.9 L893.3 342.9 L895.6 339.0 L897.9 335.2 L900.2 331.4 L902.5 327.8 L904.9 324.2 L907.2 320.7 L909.5 317.2 L911.8 313.9 L914.2 310.6 L916.5 307.4 L918.8 304.3 L921.1 301.3 L923.4 298.3 L925.8 295.5 L928.1 292.7 L930.4 290.0 L932.7 287.4 L935.1 284.8 L937.4 282.3 L939.7 280.0 L942.0 277.6 L944.4 275.4 L946.7 273.3 L949.0 271.2 L951.3 269.2 L953.6 267.3 L956.0 265.5 L958.3 263.7 L960.6 262.1 L962.9 260.5 L965.3 259.0 L967.6 257.6 L969.9 256.2 L972.2 255.0 L974.5 253.8 L976.9 252.6 L979.2 251.6 L981.5 250.7 L983.8 249.8 L986.2 249.0 L988.5 248.3 L990.8 247.6 L993.1 247.0 L995.4 246.5 L997.8 246.1 L1000.1 245.8 L1002.4 245.5 L1004.7 245.3 L1007.1 245.2 L1009.4 245.1 L1011.7 245.1 L1014.0 245.2 L1016.3 245.4 L1018.7 245.6 L1021.0 245.9 L1023.3 246.3 L1025.6 246.8 L1028.0 247.3 L1030.3 247.9 L1032.6 248.5 L1034.9 249.2 L1037.2 250.0 L1039.6 250.8 L1041.9 251.8 L1044.2 252.7 L1046.5 253.8 L1048.9 254.9 L1051.2 256.1 L1053.5 257.3 L1055.8 258.6 L1058.2 259.9 L1060.5 261.3 L1062.8 262.8 L1065.1 264.3 L1067.4 265.9 L1069.8 267.6 L1072.1 269.3 L1074.4 271.0 L1076.7 272.8 L1079.1 274.7 L1081.4 276.6 L1083.7 278.6 L1086.0 280.6 L1088.3 282.7 L1090.7 284.8 L1093.0 287.0 L1095.3 289.2 L1097.6 291.5 L1100.0 293.8 L1102.3 296.2 L1104.6 298.6 L1106.9 301.1 L1109.2 303.6 L1111.6 306.2 L1113.9 308.8 L1116.2 311.4 L1118.5 314.1 L1120.9 316.8 L1123.2 319.6 L1125.5 322.4 L1127.8 325.2 L1130.1 328.1 L1132.5 331.0 L1134.8 334.0 L1137.1 337.0 L1139.4 340.0 L1141.8 343.1 L1144.1 346.2 L1146.4 349.4 L1148.7 352.5 L1151.0 355.7 L1153.4 359.0 L1155.7 362.3 L1158.0 365.6 L1160.3 368.9 L1162.7 372.3 L1165.0 375.6 L1167.3 379.1 L1169.6 382.5 L1172.0 386.0 L1174.3 389.5 L1176.6 393.0 L1178.9 396.6 L1181.2 400.2 L1183.6 403.8 L1185.9 407.4 L1188.2 411.1 L1190.5 414.7 L1192.9 418.4 L1195.2 422.2 L1197.5 425.9 L1199.8 429.7 L1202.1 433.5 L1204.5 437.3 L1206.8 441.1 L1209.1 445.0 L1211.4 448.8 L1213.8 452.7 L1216.1 456.6 L1218.4 460.5 L1220.7 464.5 L1223.0 468.4" stroke="#202020" stroke-width="2" fill="none" stroke-linejoin="round" stroke-linecap="round"/><circle cx="818.5" cy="316" r="2.8" fill="#505050"/><circle cx="818.5" cy="416.3" r="2.9" fill="#202020"/><rect x="310" y="120" width="1.6" height="398" fill="#d0d0d0"/><rect x="310" y="317.6" width="921" height="1.9" fill="#d0d0d0"/><path d="M299 120.5H310M299 145.5H310M299 170.5H310M299 194.5H310M299 219.5H310M299 244.5H310M299 269.5H310M299 294.5H310M299 318.5H310M299 343.5H310M299 368.5H310M299 393.5H310M299 418.5H310M299 442.5H310M299 467.5H310M299 492.5H310M299 517.5H310M310.5 320V324M341.5 320V324M373.5 320V324M405.5 320V324M437.5 320V324M468.5 320V324M500.5 320V324M532.5 320V324M564.5 320V324M595.5 320V324M627.5 320V324M659.5 320V324M691.5 320V324M722.5 320V324M754.5 320V324M786.5 320V324M818.5 320V324M849.5 320V324M881.5 320V324M913.5 320V324M945.5 320V324M976.5 320V324M1008.5 320V324M1040.5 320V324M1072.5 320V324M1103.5 320V324M1135.5 320V324M1167.5 320V324M1199.5 320V324M1230.5 320V324" stroke="#000" stroke-width="1" fill="none" shape-rendering="crispEdges"/><g font-family="Liberation Sans, sans-serif" fill="#000"><g font-size="13" text-anchor="end" letter-spacing="-0.2"><text x="295.3" y="124.4">16000</text><text x="295.3" y="149.2">14000</text><text x="295.3" y="174.0">12000</text><text x="295.3" y="198.8">10000</text><text x="295.3" y="223.5">8000</text><text x="295.3" y="248.3">6000</text><text x="295.3" y="273.1">4000</text><text x="295.3" y="297.9">2000</text><text x="295.3" y="322.7">0</text><text x="295.3" y="347.5">-2000</text><text x="295.3" y="372.2">-4000</text><text x="295.3" y="397.0">-6000</text><text x="295.3" y="421.8">-8000</text><text x="295.3" y="446.6">-10000</text><text x="295.3" y="471.4">-12000</text><text x="295.3" y="496.2">-14000</text><text x="295.3" y="521.0">-16000</text></g><g font-size="10.67" text-anchor="middle"><text x="310.4" y="335.2">67500</text><text x="342.2" y="349.9">70000</text><text x="373.9" y="335.2">72500</text><text x="405.7" y="349.9">75000</text><text x="437.4" y="335.2">77500</text><text x="469.2" y="349.9">80000</text><text x="500.9" y="335.2">82500</text><text x="532.7" y="349.9">85000</text><text x="564.4" y="335.2">87500</text><text x="596.2" y="349.9">90000</text><text x="627.9" y="335.2">92500</text><text x="659.6" y="349.9">95000</text><text x="691.4" y="335.2">97500</text><text x="723.1" y="349.9">100000</text><text x="754.9" y="335.2">102500</text><text x="786.6" y="349.9">105000</text><text x="818.4" y="335.2">107500</text><text x="850.1" y="349.9">110000</text><text x="881.9" y="335.2">112500</text><text x="913.6" y="349.9">115000</text><text x="945.3" y="335.2">117500</text><text x="977.1" y="349.9">120000</text><text x="1008.8" y="335.2">122500</text><text x="1040.6" y="349.9">125000</text><text x="1072.3" y="335.2">127500</text><text x="1104.1" y="349.9">130000</text><text x="1135.8" y="335.2">132500</text><text x="1167.6" y="349.9">135000</text><text x="1199.3" y="335.2">137500</text><text x="1231.1" y="349.9">140000</text></g><text x="449.20" y="92" font-size="12.5" letter-spacing="0.42">Портфель:</text><text x="522.50" y="92" font-size="12.5">Ось</text><text x="551.20" y="92" font-size="12.5" letter-spacing="-0.51">X:</text><text x="570.00" y="92" font-size="12.5" letter-spacing="-0.34">107540</text><text x="616.20" y="92" font-size="12.5">Ось</text><text x="645.00" y="92" font-size="12.5" letter-spacing="-0.60">Y:</text><text x="667.00" y="92" font-size="12.5" letter-spacing="0.19">(Текущий</text><text x="728.00" y="92" font-size="12.5" letter-spacing="-0.06">208,85)</text><text x="782.00" y="92" font-size="12.5" letter-spacing="-0.22">(+1</text><text x="805.00" y="92" font-size="12.5" letter-spacing="-0.34">дн.</text><text x="829.60" y="92" font-size="12.5" letter-spacing="-0.20">-64,01)</text><text x="878.90" y="92" font-size="12.5" letter-spacing="-0.54">(На</text><text x="904.00" y="92" font-size="12.5" letter-spacing="0.14">экспирацию</text><text x="981.40" y="92" font-size="12.5" letter-spacing="-0.02">-7861,25)</text></g><path d="M396.7 307.8L407.2 325.7M1050 324L1068 308.3" stroke="#009ee6" stroke-width="2.6" stroke-linecap="round"/></svg>
<div class="a " style="left:0px;top:546px;width:1291px;height:4px;background:#d3d3d3;"></div>
<div class="a " style="left:0px;top:550px;width:1291px;height:228px;background:#f5f5f5;"></div>
<div class="a " style="left:-1px;top:555px;width:1291px;height:224px;border:1px solid #a0a0a0;border-bottom:none;box-shadow:inset 1px 1px 0 #fff, 1px 0 0 #fff;"></div>
<div class="a " style="left:8px;top:550px;width:56px;height:12px;background:#f5f5f5;"></div>
<span class="a t " style="top:549.89px;font-size:11px;line-height:14px;letter-spacing:-0.174px;left:10.5px;">Портфель</span>
<div class="a s" style="left:5px;top:572px;width:91px;height:20px;background:#f0f0f0;"></div>
<div class="a r" style="left:79px;top:574px;width:15px;height:17px;"></div>
<svg class="a" style="left:83px;top:580px" width="7" height="4" viewBox="0 0 7 4" shape-rendering="crispEdges"><path d="M0 0h7v1h-7zM1 1h5v1h-5zM2 2h3v1h-3zM3 3h1v1h-1z" fill="#000"/></svg>
<div class="a " style="left:8px;top:575px;width:1px;height:11px;background:#000;"></div>
<div class="a" style="left:8px;top:574px;width:71px;height:16px;overflow:hidden">
<span class="a t " style="top:0.39px;font-size:11px;line-height:14px;letter-spacing:0.024px;left:-1px;">длинный стре</span>
</div>
<div class="a r" style="left:103px;top:570px;width:55px;height:23px;background:#d4d0c8;"></div>
<span class="a t " style="top:573.49px;font-size:11px;line-height:14px;letter-spacing:0.005px;left:111px;">Импорт</span>
<div class="a r" style="left:164px;top:570px;width:57px;height:23px;background:#d4d0c8;"></div>
<span class="a t " style="top:573.49px;font-size:11px;line-height:14px;letter-spacing:0.071px;left:171px;">Удалить</span>
<div class="a r" style="left:227px;top:570px;width:72px;height:23px;background:#d4d0c8;"></div>
<span class="a t " style="top:573.49px;font-size:11px;line-height:14px;letter-spacing:-0.130px;left:235.5px;">Сохранить</span>
<div class="a s" style="left:313px;top:576px;width:13px;height:13px;background:#d4d0c8;"></div>
<span class="a t dis" style="top:576.69px;font-size:11px;line-height:14px;color:#808080;letter-spacing:-0.445px;left:333px;">DH</span>
<div class="a s" style="left:361px;top:573px;width:33px;height:19px;background:#d4d0c8;"></div>
<span class="a t " style="top:576.49px;font-size:11px;line-height:14px;left:365.5px;">0</span>
<div class="a r" style="left:376px;top:575px;width:16px;height:8px;"></div>
<div class="a r" style="left:376px;top:583px;width:16px;height:7px;"></div>
<svg class="a" style="left:381px;top:577px" width="5" height="3" viewBox="0 0 5 3"><path d="M0 3H5L2.5 0.5Z" fill="#000" shape-rendering="crispEdges"/></svg>
<svg class="a" style="left:381px;top:585px" width="5" height="3" viewBox="0 0 5 3"><path d="M0 0H5L2.5 2.5Z" fill="#000" shape-rendering="crispEdges"/></svg>
<div class="a s" style="left:400px;top:573px;width:33px;height:19px;background:#d4d0c8;"></div>
<span class="a t " style="top:576.49px;font-size:11px;line-height:14px;left:404.5px;">1</span>
<div class="a r" style="left:415px;top:575px;width:16px;height:8px;"></div>
<div class="a r" style="left:415px;top:583px;width:16px;height:7px;"></div>
<svg class="a" style="left:420px;top:577px" width="5" height="3" viewBox="0 0 5 3"><path d="M0 3H5L2.5 0.5Z" fill="#000" shape-rendering="crispEdges"/></svg>
<svg class="a" style="left:420px;top:585px" width="5" height="3" viewBox="0 0 5 3"><path d="M0 0H5L2.5 2.5Z" fill="#000" shape-rendering="crispEdges"/></svg>
<div class="a s" style="left:467px;top:575px;width:13px;height:13px;background:#f0f0f0;"></div>
<span class="a t " style="top:576.19px;font-size:11px;line-height:14px;letter-spacing:-0.800px;left:487px;">M</span>
<span class="a t " style="top:575.19px;font-size:11px;line-height:14px;letter-spacing:-0.800px;left:562px;">D</span>
<div class="a s" style="left:580px;top:573px;width:30px;height:18px;background:#f5f5f5;"></div>
<span class="a t " style="top:575.19px;font-size:11px;line-height:14px;left:580px;width:30px;text-align:center;">0</span>
<span class="a t " style="top:575.19px;font-size:11px;line-height:14px;letter-spacing:-0.734px;left:620px;">V1</span>
<div class="a s" style="left:643px;top:573px;width:30px;height:18px;background:#f5f5f5;"></div>
<span class="a t " style="top:575.19px;font-size:11px;line-height:14px;left:643px;width:30px;text-align:center;">0</span>
<span class="a t " style="top:575.19px;font-size:11px;line-height:14px;letter-spacing:-0.234px;left:683px;">V2</span>
<div class="a s" style="left:706px;top:573px;width:30px;height:18px;background:#f5f5f5;"></div>
<span class="a t " style="top:575.19px;font-size:11px;line-height:14px;left:706px;width:30px;text-align:center;">0</span>
<span class="a t " style="top:575.19px;font-size:11px;line-height:14px;letter-spacing:-0.734px;left:772px;">P1</span>
<div class="a s" style="left:789px;top:573px;width:54px;height:18px;background:#f5f5f5;"></div>
<span class="a t " style="top:575.19px;font-size:11px;line-height:14px;left:789px;width:54px;text-align:center;">0</span>
<span class="a t " style="top:575.19px;font-size:11px;line-height:14px;letter-spacing:-0.101px;left:853.5px;">RIZ0 107280</span>
<span class="a t " style="top:575.19px;font-size:11px;line-height:14px;letter-spacing:-0.334px;left:924.7px;">P2</span>
<div class="a s" style="left:950px;top:573px;width:56px;height:18px;background:#f5f5f5;"></div>
<span class="a t " style="top:575.19px;font-size:11px;line-height:14px;color:#808080;left:950px;width:56px;text-align:center;">0</span>
<span class="a t " style="top:575.19px;font-size:11px;line-height:14px;letter-spacing:-0.101px;left:1016.5px;">RIZ0 107280</span>
<div class="a r" style="left:1087px;top:570px;width:95px;height:21px;background:#d4d0c8;"></div>
<span class="a t " style="top:572.99px;font-size:11px;line-height:14px;letter-spacing:-0.058px;left:1097.4px;">Рассчитать ГО</span>
<span class="a t " style="top:575.59px;font-size:11px;line-height:14px;letter-spacing:-0.260px;left:1191.5px;">-19072,19 п.</span>
<div class="a " style="left:1261px;top:570px;width:24px;height:21px;border:1px solid;border-color:#d4d0c8 #404040 #404040 #d4d0c8;box-shadow:inset -1px -1px 0 #808080, inset 1px 1px 0 #fff;background:#f5f5f5;"></div>
<span class="a t " style="top:573.19px;font-size:11px;line-height:14px;left:1261px;width:24px;text-align:center;">_</span>
<div class="a " style="left:5px;top:599px;width:1280px;height:179px;border-left:2px solid #000;border-top:2px solid #000;background:#f5f5f5;"></div>
<div class="a " style="left:7px;top:601px;width:1277px;height:29px;background:#d3d3d3;border-top:1px solid #fff;border-left:1px solid #fff;"></div>
<div class="a " style="left:7px;top:630px;width:1277px;height:1px;background:#808080;"></div>
<div class="a " style="left:56px;top:603px;width:1px;height:26px;background:#808080;"></div>
<div class="a " style="left:57px;top:603px;width:1px;height:26px;background:#fff;"></div>
<span class="a t " style="top:610.19px;font-size:11px;line-height:14px;left:7px;width:49px;text-align:center;">Расчет</span>
<div class="a " style="left:278px;top:603px;width:1px;height:26px;background:#808080;"></div>
<div class="a " style="left:279px;top:603px;width:1px;height:26px;background:#fff;"></div>
<span class="a t " style="top:610.19px;font-size:11px;line-height:14px;left:57px;width:221px;text-align:center;">Код бумаги</span>
<div class="a " style="left:347px;top:603px;width:1px;height:26px;background:#808080;"></div>
<div class="a " style="left:348px;top:603px;width:1px;height:26px;background:#fff;"></div>
<span class="a t " style="top:603.69px;font-size:11px;line-height:14px;left:279px;width:68px;text-align:center;">Тип</span>
<span class="a t " style="top:615.49px;font-size:11px;line-height:14px;left:279px;width:68px;text-align:center;">опциона</span>
<div class="a " style="left:435px;top:603px;width:1px;height:26px;background:#808080;"></div>
<div class="a " style="left:436px;top:603px;width:1px;height:26px;background:#fff;"></div>
<span class="a t " style="top:603.69px;font-size:11px;line-height:14px;left:348px;width:87px;text-align:center;">Дата</span>
<span class="a t " style="top:615.49px;font-size:11px;line-height:14px;left:348px;width:87px;text-align:center;">погашения</span>
<div class="a " style="left:536px;top:603px;width:1px;height:26px;background:#808080;"></div>
<div class="a " style="left:537px;top:603px;width:1px;height:26px;background:#fff;"></div>
<span class="a t " style="top:603.69px;font-size:11px;line-height:14px;left:436px;width:100px;text-align:center;">Дней до</span>
<span class="a t " style="top:615.49px;font-size:11px;line-height:14px;left:436px;width:100px;text-align:center;">погашения</span>
<div class="a " style="left:608px;top:603px;width:1px;height:26px;background:#808080;"></div>
<div class="a " style="left:609px;top:603px;width:1px;height:26px;background:#fff;"></div>
<span class="a t " style="top:610.19px;font-size:11px;line-height:14px;left:537px;width:71px;text-align:center;">Количество</span>
<div class="a " style="left:689px;top:603px;width:1px;height:26px;background:#808080;"></div>
<div class="a " style="left:690px;top:603px;width:1px;height:26px;background:#fff;"></div>
<span class="a t " style="top:603.69px;font-size:11px;line-height:14px;left:609px;width:80px;text-align:center;">Цена</span>
<span class="a t " style="top:615.49px;font-size:11px;line-height:14px;left:609px;width:80px;text-align:center;">открытия</span>
<div class="a " style="left:816px;top:603px;width:1px;height:26px;background:#808080;"></div>
<div class="a " style="left:817px;top:603px;width:1px;height:26px;background:#fff;"></div>
<span class="a t " style="top:603.69px;font-size:11px;line-height:14px;left:690px;width:126px;text-align:center;">Волатильность</span>
<span class="a t " style="top:615.49px;font-size:11px;line-height:14px;left:690px;width:126px;text-align:center;">открытия</span>
<div class="a " style="left:921px;top:603px;width:1px;height:26px;background:#808080;"></div>
<div class="a " style="left:922px;top:603px;width:1px;height:26px;background:#fff;"></div>
<span class="a t " style="top:603.69px;font-size:11px;line-height:14px;left:817px;width:104px;text-align:center;">Теоретическая</span>
<span class="a t " style="top:615.49px;font-size:11px;line-height:14px;left:817px;width:104px;text-align:center;">цена</span>
<div class="a " style="left:973px;top:603px;width:1px;height:26px;background:#808080;"></div>
<div class="a " style="left:974px;top:603px;width:1px;height:26px;background:#fff;"></div>
<span class="a t " style="top:610.19px;font-size:11px;line-height:14px;left:922px;width:51px;text-align:center;">Профит</span>
<div class="a " style="left:1063px;top:603px;width:1px;height:26px;background:#808080;"></div>
<div class="a " style="left:1064px;top:603px;width:1px;height:26px;background:#fff;"></div>
<span class="a t " style="top:610.19px;font-size:11px;line-height:14px;left:974px;width:89px;text-align:center;">Волатильность</span>
<div class="a " style="left:1115px;top:603px;width:1px;height:26px;background:#808080;"></div>
<div class="a " style="left:1116px;top:603px;width:1px;height:26px;background:#fff;"></div>
<span class="a t " style="top:610.19px;font-size:11px;line-height:14px;left:1064px;width:51px;text-align:center;">Дельта</span>
<div class="a " style="left:1170px;top:603px;width:1px;height:26px;background:#808080;"></div>
<div class="a " style="left:1171px;top:603px;width:1px;height:26px;background:#fff;"></div>
<span class="a t " style="top:610.19px;font-size:11px;line-height:14px;left:1116px;width:54px;text-align:center;">Гамма</span>
<div class="a " style="left:1214px;top:603px;width:1px;height:26px;background:#808080;"></div>
<div class="a " style="left:1215px;top:603px;width:1px;height:26px;background:#fff;"></div>
<span class="a t " style="top:610.19px;font-size:11px;line-height:14px;left:1171px;width:43px;text-align:center;">Вега</span>
<div class="a " style="left:1258px;top:603px;width:1px;height:26px;background:#808080;"></div>
<div class="a " style="left:1259px;top:603px;width:1px;height:26px;background:#fff;"></div>
<span class="a t " style="top:610.19px;font-size:11px;line-height:14px;left:1215px;width:43px;text-align:center;">Тета</span>
<span class="a t " style="top:610.19px;font-size:11px;line-height:14px;left:1259px;width:24px;text-align:center;">X</span>
<div class="a " style="left:7px;top:652px;width:1277px;height:1px;background:#000;"></div>
<div class="a " style="left:56px;top:631px;width:1px;height:21px;background:#000;"></div>
<div class="a " style="left:7px;top:631px;width:49px;height:21px;background:#0a246a;"></div>
<div class="a s" style="left:25px;top:635px;width:13px;height:13px;background:#f0f0f0;"><svg class="a" style="left:2px;top:2px" width="7" height="7" viewBox="0 0 7 7" shape-rendering="crispEdges"><path d="M0 2h1v3h-1zM1 3h1v3h-1zM2 4h1v3h-1zM3 3h1v3h-1zM4 2h1v3h-1zM5 1h1v3h-1zM6 0h1v3h-1z" fill="#000"/></svg></div>
<div class="a " style="left:278px;top:631px;width:1px;height:21px;background:#000;"></div>
<span class="a t " style="top:634.69px;font-size:11px;line-height:14px;left:57px;width:221px;text-align:center;">RI90000BX0</span>
<div class="a " style="left:347px;top:631px;width:1px;height:21px;background:#000;"></div>
<span class="a t " style="top:634.69px;font-size:11px;line-height:14px;left:279px;width:68px;text-align:center;">Put</span>
<div class="a " style="left:435px;top:631px;width:1px;height:21px;background:#000;"></div>
<span class="a t " style="top:634.69px;font-size:11px;line-height:14px;left:348px;width:87px;text-align:center;">17.12.2020</span>
<div class="a " style="left:536px;top:631px;width:1px;height:21px;background:#000;"></div>
<span class="a t " style="top:634.69px;font-size:11px;line-height:14px;left:436px;width:100px;text-align:center;">44</span>
<div class="a " style="left:608px;top:631px;width:1px;height:21px;background:#000;"></div>
<span class="a t " style="top:634.69px;font-size:11px;line-height:14px;left:537px;width:71px;text-align:center;">-5</span>
<div class="a " style="left:689px;top:631px;width:1px;height:21px;background:#000;"></div>
<span class="a t " style="top:634.69px;font-size:11px;line-height:14px;left:609px;width:80px;text-align:center;">1310</span>
<div class="a " style="left:816px;top:631px;width:1px;height:21px;background:#000;"></div>
<span class="a t " style="top:634.69px;font-size:11px;line-height:14px;left:690px;width:126px;text-align:center;">48,7</span>
<div class="a " style="left:921px;top:631px;width:1px;height:21px;background:#000;"></div>
<span class="a t " style="top:634.69px;font-size:11px;line-height:14px;left:817px;width:104px;text-align:center;">1295,84</span>
<div class="a " style="left:973px;top:631px;width:1px;height:21px;background:#000;"></div>
<div class="a " style="left:922px;top:631px;width:51px;height:21px;background:#90ee90;"></div>
<span class="a t " style="top:634.69px;font-size:11px;line-height:14px;left:922px;width:51px;text-align:center;">70,8</span>
<div class="a " style="left:1063px;top:631px;width:1px;height:21px;background:#000;"></div>
<span class="a t " style="top:634.69px;font-size:11px;line-height:14px;left:974px;width:89px;text-align:center;">48,52</span>
<div class="a " style="left:1115px;top:631px;width:1px;height:21px;background:#000;"></div>
<span class="a t " style="top:634.69px;font-size:11px;line-height:14px;left:1064px;width:51px;text-align:center;">0,66</span>
<div class="a " style="left:1170px;top:631px;width:1px;height:21px;background:#000;"></div>
<span class="a t " style="top:634.69px;font-size:11px;line-height:14px;left:1116px;width:54px;text-align:center;">-5,9E-05</span>
<div class="a " style="left:1214px;top:631px;width:1px;height:21px;background:#000;"></div>
<span class="a t " style="top:634.69px;font-size:11px;line-height:14px;left:1171px;width:43px;text-align:center;">-399,74</span>
<div class="a " style="left:1258px;top:631px;width:1px;height:21px;background:#000;"></div>
<span class="a t " style="top:634.69px;font-size:11px;line-height:14px;left:1215px;width:43px;text-align:center;">217,24</span>
<div class="a " style="left:1283px;top:631px;width:1px;height:21px;background:#000;"></div>
<div class="a " style="left:1259px;top:631px;width:24px;height:21px;border:1px solid;border-color:#d4d0c8 #404040 #404040 #d4d0c8;box-shadow:inset -1px -1px 0 #808080, inset 1px 1px 0 #fff;background:#f5f5f5;"></div>
<span class="a t " style="top:634.69px;font-size:11px;line-height:14px;left:1259px;width:23px;text-align:center;">X</span>
<div class="a " style="left:7px;top:674px;width:1277px;height:1px;background:#000;"></div>
<div class="a " style="left:56px;top:653px;width:1px;height:21px;background:#000;"></div>
<div class="a s" style="left:25px;top:657px;width:13px;height:13px;background:#f0f0f0;"><svg class="a" style="left:2px;top:2px" width="7" height="7" viewBox="0 0 7 7" shape-rendering="crispEdges"><path d="M0 2h1v3h-1zM1 3h1v3h-1zM2 4h1v3h-1zM3 3h1v3h-1zM4 2h1v3h-1zM5 1h1v3h-1zM6 0h1v3h-1z" fill="#000"/></svg></div>
<div class="a " style="left:278px;top:653px;width:1px;height:21px;background:#000;"></div>
<span class="a t " style="top:656.69px;font-size:11px;line-height:14px;left:57px;width:221px;text-align:center;">RI120000BL0</span>
<div class="a " style="left:347px;top:653px;width:1px;height:21px;background:#000;"></div>
<span class="a t " style="top:656.69px;font-size:11px;line-height:14px;left:279px;width:68px;text-align:center;">Call</span>
<div class="a " style="left:435px;top:653px;width:1px;height:21px;background:#000;"></div>
<span class="a t " style="top:656.69px;font-size:11px;line-height:14px;left:348px;width:87px;text-align:center;">17.12.2020</span>
<div class="a " style="left:536px;top:653px;width:1px;height:21px;background:#000;"></div>
<span class="a t " style="top:656.69px;font-size:11px;line-height:14px;left:436px;width:100px;text-align:center;">44</span>
<div class="a " style="left:608px;top:653px;width:1px;height:21px;background:#000;"></div>
<span class="a t " style="top:656.69px;font-size:11px;line-height:14px;left:537px;width:71px;text-align:center;">-5</span>
<div class="a " style="left:689px;top:653px;width:1px;height:21px;background:#000;"></div>
<span class="a t " style="top:656.69px;font-size:11px;line-height:14px;left:609px;width:80px;text-align:center;">1160</span>
<div class="a " style="left:816px;top:653px;width:1px;height:21px;background:#000;"></div>
<span class="a t " style="top:656.69px;font-size:11px;line-height:14px;left:690px;width:126px;text-align:center;">33,09</span>
<div class="a " style="left:921px;top:653px;width:1px;height:21px;background:#000;"></div>
<span class="a t " style="top:656.69px;font-size:11px;line-height:14px;left:817px;width:104px;text-align:center;">1234,37</span>
<div class="a " style="left:973px;top:653px;width:1px;height:21px;background:#000;"></div>
<div class="a " style="left:922px;top:653px;width:51px;height:21px;background:#ffb6c1;"></div>
<span class="a t " style="top:656.69px;font-size:11px;line-height:14px;left:922px;width:51px;text-align:center;">-371,85</span>
<div class="a " style="left:1063px;top:653px;width:1px;height:21px;background:#000;"></div>
<span class="a t " style="top:656.69px;font-size:11px;line-height:14px;left:974px;width:89px;text-align:center;">33,83</span>
<div class="a " style="left:1115px;top:653px;width:1px;height:21px;background:#000;"></div>
<span class="a t " style="top:656.69px;font-size:11px;line-height:14px;left:1064px;width:51px;text-align:center;">-0,94</span>
<div class="a " style="left:1170px;top:653px;width:1px;height:21px;background:#000;"></div>
<span class="a t " style="top:656.69px;font-size:11px;line-height:14px;left:1116px;width:54px;text-align:center;">-0,000106</span>
<div class="a " style="left:1214px;top:653px;width:1px;height:21px;background:#000;"></div>
<span class="a t " style="top:656.69px;font-size:11px;line-height:14px;left:1171px;width:43px;text-align:center;">-504,56</span>
<div class="a " style="left:1258px;top:653px;width:1px;height:21px;background:#000;"></div>
<span class="a t " style="top:656.69px;font-size:11px;line-height:14px;left:1215px;width:43px;text-align:center;">191,19</span>
<div class="a " style="left:1283px;top:653px;width:1px;height:21px;background:#000;"></div>
<div class="a " style="left:1259px;top:653px;width:24px;height:21px;border:1px solid;border-color:#d4d0c8 #404040 #404040 #d4d0c8;box-shadow:inset -1px -1px 0 #808080, inset 1px 1px 0 #fff;background:#f5f5f5;"></div>
<span class="a t " style="top:656.69px;font-size:11px;line-height:14px;left:1259px;width:23px;text-align:center;">X</span>
<div class="a " style="left:7px;top:696px;width:1277px;height:1px;background:#000;"></div>
<div class="a " style="left:56px;top:675px;width:1px;height:21px;background:#000;"></div>
<div class="a s" style="left:25px;top:679px;width:13px;height:13px;background:#f0f0f0;"><svg class="a" style="left:2px;top:2px" width="7" height="7" viewBox="0 0 7 7" shape-rendering="crispEdges"><path d="M0 2h1v3h-1zM1 3h1v3h-1zM2 4h1v3h-1zM3 3h1v3h-1zM4 2h1v3h-1zM5 1h1v3h-1zM6 0h1v3h-1z" fill="#000"/></svg></div>
<div class="a " style="left:278px;top:675px;width:1px;height:21px;background:#000;"></div>
<span class="a t " style="top:678.69px;font-size:11px;line-height:14px;left:57px;width:221px;text-align:center;">RI110000BK0</span>
<div class="a " style="left:347px;top:675px;width:1px;height:21px;background:#000;"></div>
<span class="a t " style="top:678.69px;font-size:11px;line-height:14px;left:279px;width:68px;text-align:center;">Call</span>
<div class="a " style="left:435px;top:675px;width:1px;height:21px;background:#000;"></div>
<span class="a t " style="top:678.69px;font-size:11px;line-height:14px;left:348px;width:87px;text-align:center;">19.11.2020</span>
<div class="a " style="left:536px;top:675px;width:1px;height:21px;background:#000;"></div>
<span class="a t " style="top:678.69px;font-size:11px;line-height:14px;left:436px;width:100px;text-align:center;">16</span>
<div class="a " style="left:608px;top:675px;width:1px;height:21px;background:#000;"></div>
<span class="a t " style="top:678.69px;font-size:11px;line-height:14px;left:537px;width:71px;text-align:center;">3</span>
<div class="a " style="left:689px;top:675px;width:1px;height:21px;background:#000;"></div>
<span class="a t " style="top:678.69px;font-size:11px;line-height:14px;left:609px;width:80px;text-align:center;">2470</span>
<div class="a " style="left:816px;top:675px;width:1px;height:21px;background:#000;"></div>
<span class="a t " style="top:678.69px;font-size:11px;line-height:14px;left:690px;width:126px;text-align:center;">39,59</span>
<div class="a " style="left:921px;top:675px;width:1px;height:21px;background:#000;"></div>
<span class="a t " style="top:678.69px;font-size:11px;line-height:14px;left:817px;width:104px;text-align:center;">2641,62</span>
<div class="a " style="left:973px;top:675px;width:1px;height:21px;background:#000;"></div>
<div class="a " style="left:922px;top:675px;width:51px;height:21px;background:#90ee90;"></div>
<span class="a t " style="top:678.69px;font-size:11px;line-height:14px;left:922px;width:51px;text-align:center;">514,86</span>
<div class="a " style="left:1063px;top:675px;width:1px;height:21px;background:#000;"></div>
<span class="a t " style="top:678.69px;font-size:11px;line-height:14px;left:974px;width:89px;text-align:center;">41,52</span>
<div class="a " style="left:1115px;top:675px;width:1px;height:21px;background:#000;"></div>
<span class="a t " style="top:678.69px;font-size:11px;line-height:14px;left:1064px;width:51px;text-align:center;">1,22</span>
<div class="a " style="left:1170px;top:675px;width:1px;height:21px;background:#000;"></div>
<span class="a t " style="top:678.69px;font-size:11px;line-height:14px;left:1116px;width:54px;text-align:center;">0,000122</span>
<div class="a " style="left:1214px;top:675px;width:1px;height:21px;background:#000;"></div>
<span class="a t " style="top:678.69px;font-size:11px;line-height:14px;left:1171px;width:43px;text-align:center;">267,15</span>
<div class="a " style="left:1258px;top:675px;width:1px;height:21px;background:#000;"></div>
<span class="a t " style="top:678.69px;font-size:11px;line-height:14px;left:1215px;width:43px;text-align:center;">-331,75</span>
<div class="a " style="left:1283px;top:675px;width:1px;height:21px;background:#000;"></div>
<div class="a " style="left:1259px;top:675px;width:24px;height:21px;border:1px solid;border-color:#d4d0c8 #404040 #404040 #d4d0c8;box-shadow:inset -1px -1px 0 #808080, inset 1px 1px 0 #fff;background:#f5f5f5;"></div>
<span class="a t " style="top:678.69px;font-size:11px;line-height:14px;left:1259px;width:23px;text-align:center;">X</span>
<div class="a " style="left:7px;top:718px;width:1277px;height:1px;background:#000;"></div>
<div class="a " style="left:56px;top:697px;width:1px;height:21px;background:#000;"></div>
<div class="a s" style="left:25px;top:701px;width:13px;height:13px;background:#f0f0f0;"><svg class="a" style="left:2px;top:2px" width="7" height="7" viewBox="0 0 7 7" shape-rendering="crispEdges"><path d="M0 2h1v3h-1zM1 3h1v3h-1zM2 4h1v3h-1zM3 3h1v3h-1zM4 2h1v3h-1zM5 1h1v3h-1zM6 0h1v3h-1z" fill="#000"/></svg></div>
<div class="a " style="left:278px;top:697px;width:1px;height:21px;background:#000;"></div>
<span class="a t " style="top:700.69px;font-size:11px;line-height:14px;left:57px;width:221px;text-align:center;">RI102500BW0</span>
<div class="a " style="left:347px;top:697px;width:1px;height:21px;background:#000;"></div>
<span class="a t " style="top:700.69px;font-size:11px;line-height:14px;left:279px;width:68px;text-align:center;">Put</span>
<div class="a " style="left:435px;top:697px;width:1px;height:21px;background:#000;"></div>
<span class="a t " style="top:700.69px;font-size:11px;line-height:14px;left:348px;width:87px;text-align:center;">19.11.2020</span>
<div class="a " style="left:536px;top:697px;width:1px;height:21px;background:#000;"></div>
<span class="a t " style="top:700.69px;font-size:11px;line-height:14px;left:436px;width:100px;text-align:center;">16</span>
<div class="a " style="left:608px;top:697px;width:1px;height:21px;background:#000;"></div>
<span class="a t " style="top:700.69px;font-size:11px;line-height:14px;left:537px;width:71px;text-align:center;">3</span>
<div class="a " style="left:689px;top:697px;width:1px;height:21px;background:#000;"></div>
<span class="a t " style="top:700.69px;font-size:11px;line-height:14px;left:609px;width:80px;text-align:center;">2270</span>
<div class="a " style="left:816px;top:697px;width:1px;height:21px;background:#000;"></div>
<span class="a t " style="top:700.69px;font-size:11px;line-height:14px;left:690px;width:126px;text-align:center;">47,35</span>
<div class="a " style="left:921px;top:697px;width:1px;height:21px;background:#000;"></div>
<span class="a t " style="top:700.69px;font-size:11px;line-height:14px;left:817px;width:104px;text-align:center;">2266,5</span>
<div class="a " style="left:973px;top:697px;width:1px;height:21px;background:#000;"></div>
<div class="a " style="left:922px;top:697px;width:51px;height:21px;background:#ffb6c1;"></div>
<span class="a t " style="top:700.69px;font-size:11px;line-height:14px;left:922px;width:51px;text-align:center;">-10,5</span>
<div class="a " style="left:1063px;top:697px;width:1px;height:21px;background:#000;"></div>
<span class="a t " style="top:700.69px;font-size:11px;line-height:14px;left:974px;width:89px;text-align:center;">47,31</span>
<div class="a " style="left:1115px;top:697px;width:1px;height:21px;background:#000;"></div>
<span class="a t " style="top:700.69px;font-size:11px;line-height:14px;left:1064px;width:51px;text-align:center;">-0,92</span>
<div class="a " style="left:1170px;top:697px;width:1px;height:21px;background:#000;"></div>
<span class="a t " style="top:700.69px;font-size:11px;line-height:14px;left:1116px;width:54px;text-align:center;">9,7E-05</span>
<div class="a " style="left:1214px;top:697px;width:1px;height:21px;background:#000;"></div>
<span class="a t " style="top:700.69px;font-size:11px;line-height:14px;left:1171px;width:43px;text-align:center;">242,39</span>
<div class="a " style="left:1258px;top:697px;width:1px;height:21px;background:#000;"></div>
<span class="a t " style="top:700.69px;font-size:11px;line-height:14px;left:1215px;width:43px;text-align:center;">-342,99</span>
<div class="a " style="left:1283px;top:697px;width:1px;height:21px;background:#000;"></div>
<div class="a " style="left:1259px;top:697px;width:24px;height:21px;border:1px solid;border-color:#d4d0c8 #404040 #404040 #d4d0c8;box-shadow:inset -1px -1px 0 #808080, inset 1px 1px 0 #fff;background:#f5f5f5;"></div>
<span class="a t " style="top:700.69px;font-size:11px;line-height:14px;left:1259px;width:23px;text-align:center;">X</span>
<div class="a " style="left:7px;top:740px;width:1277px;height:1px;background:#000;"></div>
<div class="a " style="left:56px;top:719px;width:1px;height:21px;background:#000;"></div>
<div class="a s" style="left:25px;top:723px;width:13px;height:13px;background:#f0f0f0;"><svg class="a" style="left:2px;top:2px" width="7" height="7" viewBox="0 0 7 7" shape-rendering="crispEdges"><path d="M0 2h1v3h-1zM1 3h1v3h-1zM2 4h1v3h-1zM3 3h1v3h-1zM4 2h1v3h-1zM5 1h1v3h-1zM6 0h1v3h-1z" fill="#000"/></svg></div>
<div class="a " style="left:278px;top:719px;width:1px;height:21px;background:#000;"></div>
<span class="a t " style="top:722.69px;font-size:11px;line-height:14px;left:57px;width:221px;text-align:center;">FixedProfit</span>
<div class="a " style="left:347px;top:719px;width:1px;height:21px;background:#000;"></div>
<div class="a " style="left:435px;top:719px;width:1px;height:21px;background:#000;"></div>
<div class="a " style="left:536px;top:719px;width:1px;height:21px;background:#000;"></div>
<div class="a " style="left:608px;top:719px;width:1px;height:21px;background:#000;"></div>
<div class="a " style="left:689px;top:719px;width:1px;height:21px;background:#000;"></div>
<div class="a " style="left:816px;top:719px;width:1px;height:21px;background:#000;"></div>
<div class="a " style="left:921px;top:719px;width:1px;height:21px;background:#000;"></div>
<div class="a " style="left:973px;top:719px;width:1px;height:21px;background:#000;"></div>
<span class="a t " style="top:722.69px;font-size:11px;line-height:14px;left:922px;width:51px;text-align:center;">0</span>
<div class="a " style="left:1063px;top:719px;width:1px;height:21px;background:#000;"></div>
<div class="a " style="left:1115px;top:719px;width:1px;height:21px;background:#000;"></div>
<div class="a " style="left:1170px;top:719px;width:1px;height:21px;background:#000;"></div>
<div class="a " style="left:1214px;top:719px;width:1px;height:21px;background:#000;"></div>
<div class="a " style="left:1258px;top:719px;width:1px;height:21px;background:#000;"></div>
<div class="a " style="left:1283px;top:719px;width:1px;height:21px;background:#000;"></div>
<div class="a " style="left:1259px;top:719px;width:24px;height:21px;border:1px solid;border-color:#d4d0c8 #404040 #404040 #d4d0c8;box-shadow:inset -1px -1px 0 #808080, inset 1px 1px 0 #fff;background:#f5f5f5;"></div>
<span class="a t " style="top:722.69px;font-size:11px;line-height:14px;left:1259px;width:23px;text-align:center;">X</span>
<div class="a " style="left:7px;top:762px;width:1277px;height:1px;background:#000;"></div>
<div class="a " style="left:56px;top:741px;width:1px;height:21px;background:#000;"></div>
<div class="a s" style="left:25px;top:745px;width:13px;height:13px;background:#f0f0f0;"><svg class="a" style="left:2px;top:2px" width="7" height="7" viewBox="0 0 7 7" shape-rendering="crispEdges"><path d="M0 2h1v3h-1zM1 3h1v3h-1zM2 4h1v3h-1zM3 3h1v3h-1zM4 2h1v3h-1zM5 1h1v3h-1zM6 0h1v3h-1z" fill="#000"/></svg></div>
<div class="a " style="left:278px;top:741px;width:1px;height:21px;background:#000;"></div>
<span class="a t " style="top:744.69px;font-size:11px;line-height:14px;left:57px;width:221px;text-align:center;">Итого:</span>
<div class="a " style="left:347px;top:741px;width:1px;height:21px;background:#000;"></div>
<div class="a " style="left:435px;top:741px;width:1px;height:21px;background:#000;"></div>
<div class="a " style="left:536px;top:741px;width:1px;height:21px;background:#000;"></div>
<div class="a " style="left:608px;top:741px;width:1px;height:21px;background:#000;"></div>
<div class="a " style="left:689px;top:741px;width:1px;height:21px;background:#000;"></div>
<div class="a " style="left:816px;top:741px;width:1px;height:21px;background:#000;"></div>
<div class="a " style="left:921px;top:741px;width:1px;height:21px;background:#000;"></div>
<div class="a " style="left:973px;top:741px;width:1px;height:21px;background:#000;"></div>
<div class="a " style="left:922px;top:741px;width:51px;height:21px;background:#90ee90;"></div>
<span class="a t " style="top:744.69px;font-size:11px;line-height:14px;left:922px;width:51px;text-align:center;">203,31</span>
<div class="a " style="left:1063px;top:741px;width:1px;height:21px;background:#000;"></div>
<div class="a " style="left:1115px;top:741px;width:1px;height:21px;background:#000;"></div>
<span class="a t " style="top:744.69px;font-size:11px;line-height:14px;left:1064px;width:51px;text-align:center;">0,02</span>
<div class="a " style="left:1170px;top:741px;width:1px;height:21px;background:#000;"></div>
<span class="a t " style="top:744.69px;font-size:11px;line-height:14px;left:1116px;width:54px;text-align:center;">5,4E-05</span>
<div class="a " style="left:1214px;top:741px;width:1px;height:21px;background:#000;"></div>
<span class="a t " style="top:744.69px;font-size:11px;line-height:14px;left:1171px;width:43px;text-align:center;">-394,76</span>
<div class="a " style="left:1258px;top:741px;width:1px;height:21px;background:#000;"></div>
<span class="a t " style="top:744.69px;font-size:11px;line-height:14px;left:1215px;width:43px;text-align:center;">-266,31</span>
<div class="a " style="left:1283px;top:741px;width:1px;height:21px;background:#000;"></div>
<div class="a " style="left:1259px;top:741px;width:24px;height:21px;border:1px solid;border-color:#d4d0c8 #404040 #404040 #d4d0c8;box-shadow:inset -1px -1px 0 #808080, inset 1px 1px 0 #fff;background:#f5f5f5;"></div>
<span class="a t " style="top:744.69px;font-size:11px;line-height:14px;left:1259px;width:23px;text-align:center;">X</span>
<div class="a " style="left:0px;top:778px;width:1291px;height:1px;background:#fff;"></div>
<div class="a " style="left:0px;top:779px;width:1291px;height:21px;background:#d3d3d3;"></div>
<div class="a " style="left:0px;top:802px;width:1293px;height:1px;background:#808080;"></div>
<span class="a t " style="top:783.49px;font-size:11px;line-height:14px;letter-spacing:-0.327px;left:2.5px;">Время обновления 28 мс</span>
<span class="a t " style="top:783.49px;font-size:11px;line-height:14px;letter-spacing:0.104px;left:131.8px;">Profit=203,31</span>
<span class="a t " style="top:783.49px;font-size:11px;line-height:14px;letter-spacing:0.101px;left:202.7px;">Delta(Δ)=0,02</span>
<span class="a t " style="top:783.49px;font-size:11px;line-height:14px;letter-spacing:-0.228px;left:276.3px;">Gamma(Γ)=5,4E-05</span>
<span class="a t " style="top:783.49px;font-size:11px;line-height:14px;left:373.8px;">Vega=-394,76</span>
<span class="a t " style="top:783.49px;font-size:11px;line-height:14px;letter-spacing:0.022px;left:447.1px;">Theta(Θ)=-266,31</span>
<div class="a " style="left:0px;top:803px;width:1295px;height:44px;background:#d4d0c8;"></div>
<div class="a " style="left:0px;top:803px;width:1295px;height:1px;background:#eae8e2;"></div>
<div class="a " style="left:0px;top:804px;width:1295px;height:1px;background:#fff;"></div>
<div class="a r" style="left:-1px;top:807px;width:36px;height:38px;"></div>
<svg class="a" style="left:0px;top:808px" width="34" height="36" viewBox="0 0 34 36"><ellipse cx="7.5" cy="22.5" rx="9" ry="4.5" fill="#e4dfe2" stroke="#e8b8b4" stroke-width="0.8" opacity="0.7" transform="rotate(-8 7.5 22.5)"/><ellipse cx="8.8" cy="10.6" rx="10" ry="7.5" fill="#ebe8f4" stroke="#e8282c" stroke-width="1.4" transform="rotate(-18 8.8 10.6)"/><path d="M5 6L12.6 19.6M0.6 9.6L12.6 19.6" stroke="#5a6068" stroke-width="2.2" fill="none"/><path d="M5.8 6.5L12.2 18M1.8 10.2L11.6 18.4" stroke="#c8ccd4" stroke-width="0.7" fill="none"/><path d="M11 19.5L14 22" stroke="#f0f0f0" stroke-width="2.2"/><ellipse cx="20" cy="23.4" rx="5.6" ry="2.9" fill="none" stroke="#1e96e0" stroke-width="2.4" transform="rotate(40 20 23.4)"/><ellipse cx="13.6" cy="28.3" rx="5.4" ry="2.6" fill="none" stroke="#1e96e0" stroke-width="2.4" transform="rotate(74 13.6 28.3)"/></svg>
<span class="a t " style="top:816.79px;font-size:11px;line-height:14px;letter-spacing:-0.695px;left:1079.5px;">RU</span>
<div class="a " style="left:1099px;top:813px;width:1px;height:22px;background:#808080;"></div>
<div class="a " style="left:1100px;top:813px;width:1px;height:22px;background:#fff;"></div>
<div class="a " style="left:1103px;top:807px;width:190px;height:37px;border:1px solid;border-color:#808080 #fff #fff #808080;"></div>
<svg class="a" style="left:1112px;top:819px" width="12" height="13" viewBox="0 0 12 13" shape-rendering="crispEdges"><rect width="12" height="13" fill="#fff"/><rect width="11" height="12" fill="#083808"/><rect x="1" y="1" width="10" height="8" fill="#00b000"/><rect x="1.0" y="1.0" width="1" height="1" fill="#000"/><rect x="1.0" y="3.0" width="1" height="1" fill="#000"/><rect x="1.0" y="5.0" width="1" height="1" fill="#000"/><rect x="1.0" y="7.0" width="1" height="1" fill="#000"/><rect x="3.0" y="1.0" width="1" height="1" fill="#000"/><rect x="3.0" y="3.0" width="1" height="1" fill="#000"/><rect x="3.0" y="5.0" width="1" height="1" fill="#000"/><rect x="3.0" y="7.0" width="1" height="1" fill="#000"/><rect x="5.0" y="1.0" width="1" height="1" fill="#000"/><rect x="5.0" y="3.0" width="1" height="1" fill="#000"/><rect x="5.0" y="5.0" width="1" height="1" fill="#000"/><rect x="5.0" y="7.0" width="1" height="1" fill="#000"/><rect x="7.0" y="1.0" width="1" height="1" fill="#000"/><rect x="7.0" y="3.0" width="1" height="1" fill="#000"/><rect x="7.0" y="5.0" width="1" height="1" fill="#000"/><rect x="7.0" y="7.0" width="1" height="1" fill="#000"/><rect x="9.0" y="1.0" width="1" height="1" fill="#000"/><rect x="9.0" y="3.0" width="1" height="1" fill="#000"/><rect x="9.0" y="5.0" width="1" height="1" fill="#000"/><rect x="9.0" y="7.0" width="1" height="1" fill="#000"/><rect x="1" y="9" width="10" height="3" fill="#00ff00"/></svg>
<svg class="a" style="left:1133px;top:817px" width="18" height="18" viewBox="0 0 18 18"><path d="M1.3 5.4H3.8L8.2 1.3V16.7L3.8 12.6H1.3Z" fill="#fafafa" stroke="#7c7c7c" stroke-width="0.9" stroke-linejoin="round"/><path d="M3.8 5.4V12.6" stroke="#9a9a9a" stroke-width="0.7"/><path d="M10.3 5.6Q12.6 9 10.3 12.4M12.8 3.2Q16.8 9 12.8 14.8" fill="none" stroke="#7c7c7c" stroke-width="2.1" stroke-linecap="round"/><path d="M10.3 5.6Q12.6 9 10.3 12.4M12.8 3.2Q16.8 9 12.8 14.8" fill="none" stroke="#f4f4f4" stroke-width="0.9" stroke-linecap="round"/></svg>
<svg class="a" style="left:1157px;top:817px" width="18" height="18" viewBox="0 0 18 18"><defs><linearGradient id="mg" x1="0" y1="0" x2="1" y2="1"><stop offset="0" stop-color="#b8b8b4"/><stop offset="1" stop-color="#6c6c68"/></linearGradient></defs><rect x="5.3" y="3.3" width="11.3" height="10.6" fill="#fcfcfc" stroke="#808080" stroke-width="0.8"/><rect x="6.9" y="4.9" width="8.1" height="7.3" fill="url(#mg)"/><rect x="6" y="14.4" width="10.2" height="2" fill="#fcfcfc" stroke="#808080" stroke-width="0.7"/><path d="M4.2 7.5V16.6" stroke="#606060" stroke-width="2.4"/><path d="M4.2 7.5V16.6" stroke="#fafafa" stroke-width="1"/><path d="M1.6 1.6V5H2.9V1.6ZM5.4 1.6V5H6.7V1.6ZM1.6 4.6H6.7V8.2H1.6Z" fill="#fcfcfc" stroke="#505050" stroke-width="0.8" stroke-linejoin="round"/></svg>
<svg class="a" style="left:1180px;top:817px" width="20" height="18" viewBox="0 0 20 18"><defs><linearGradient id="fg" x1="0" y1="0" x2="1" y2="0"><stop offset="0.55" stop-color="#fdfdfd"/><stop offset="1" stop-color="#c4c4c4"/></linearGradient></defs><rect x="2.2" y="1.6" width="2.2" height="15.2" rx="0.8" fill="#fcfcfc" stroke="#808080" stroke-width="0.8"/><path d="M4.6 2.9Q8 1.4 10.6 3.4T17.8 4.2Q17.6 8 14.6 9.2Q12 10.6 9.6 9.3T4.6 8.8Z" fill="url(#fg)" stroke="#8c8c8c" stroke-width="0.8" stroke-linejoin="round"/></svg>
<span class="a t " style="top:810.69px;font-size:11px;line-height:14px;letter-spacing:0.020px;left:1228px;">0:41</span>
<span class="a t " style="top:826.69px;font-size:11px;line-height:14px;letter-spacing:0.125px;left:1211.5px;">03.11.2020</span>
<svg class="a" style="left:1275px;top:820px" width="16" height="13" viewBox="0 0 16 13"><defs><linearGradient id="dg" x1="0" y1="0" x2="1" y2="1"><stop offset="0" stop-color="#1040a4"/><stop offset="0.5" stop-color="#3c7cdc"/><stop offset="1" stop-color="#64a8f4"/></linearGradient></defs><rect x="0.5" y="0.5" width="15" height="12" fill="url(#dg)" stroke="#a4c4ec" stroke-width="1"/><rect x="1" y="9.2" width="14" height="2.8" fill="#363636"/><circle cx="4" cy="10.2" r="2.1" fill="#4ca4f0"/><rect x="3" y="9.2" width="1.2" height="1.2" fill="#f04020"/><rect x="4.2" y="9.4" width="1.1" height="1.1" fill="#50c030"/><rect x="3.8" y="10.4" width="1.2" height="1.1" fill="#f8d020"/></svg>
<div class="a " style="left:1199px;top:769px;width:96px;height:34px;background:#ffffe1;border:1px solid #000;"></div>
<span class="a t " style="top:771.79px;font-size:11px;line-height:14px;letter-spacing:0.082px;left:1204.5px;">3 ноября 2020 г.</span>
<span class="a t " style="top:784.89px;font-size:11px;line-height:14px;letter-spacing:0.200px;left:1204.5px;">вторник</span>
</body></html>
